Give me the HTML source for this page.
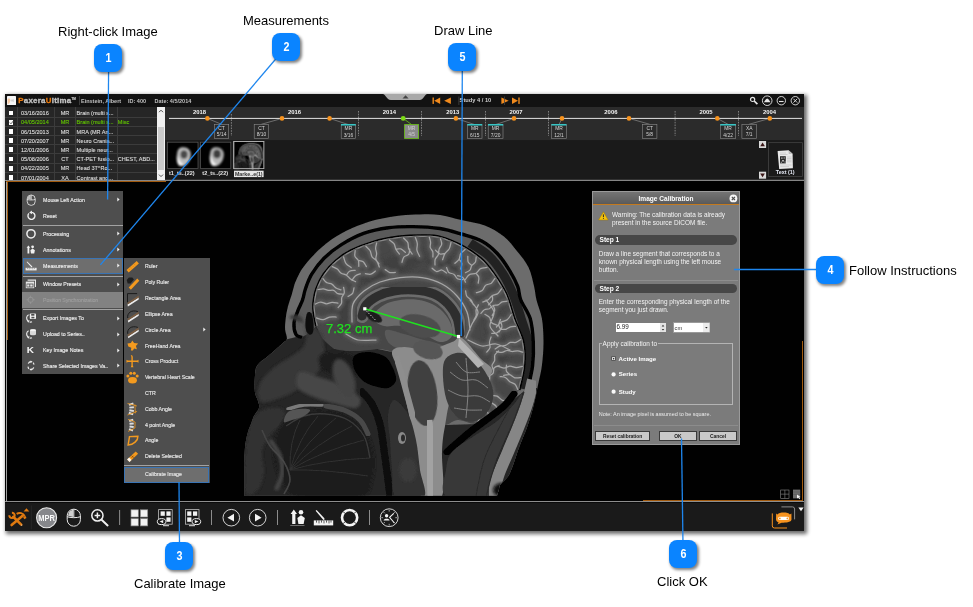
<!DOCTYPE html>
<html>
<head>
<meta charset="utf-8">
<title>Image Calibration</title>
<style>
html,body{margin:0;padding:0;background:#fff;}
body{width:973px;height:607px;position:relative;overflow:hidden;font-family:"Liberation Sans",sans-serif;}
.abs{position:absolute;}
/* callouts */
.badge{position:absolute;width:28px;height:28px;border-radius:8px;background:#0a84ff;color:#fff;font-weight:bold;font-size:12.5px;line-height:28px;text-align:center;box-shadow:1.5px 2px 3px rgba(0,0,0,.5);}
.badge span{display:inline-block;transform:scaleX(.86);}
.lbl{position:absolute;font-size:13px;line-height:15px;color:#000;white-space:nowrap;}
/* app window */
#win{position:absolute;left:5px;top:94px;width:799px;height:437px;background:#000;box-shadow:2px 2px 4px 1px rgba(0,0,0,.6);}
#titlebar{position:absolute;left:0;top:0;width:799px;height:13px;background:#121212;}
#top{position:absolute;left:0;top:13px;width:799px;height:73px;background:#1b1b1b;}
#viewer{position:absolute;left:0;top:86px;width:799px;height:322px;background:#000;overflow:hidden;}
.ln{position:absolute;}
#toolbar{position:absolute;left:0;top:408.6px;width:799px;height:28.4px;background:#1a1a1a;}
.tt{position:absolute;white-space:nowrap;color:#c0c0c0;font-weight:bold;font-size:5.5px;line-height:8px;margin-top:-0.5px}
/* study list */
#list{position:absolute;left:0;top:13px;width:160px;height:73px;background:#262626;overflow:hidden;}
.row{position:absolute;left:0;width:152px;height:9.18px;border-bottom:1px solid #3c3c3c;box-sizing:border-box;}
.row span{position:absolute;top:0.8px;font-size:5.55px;line-height:9.2px;color:#dadada;white-space:nowrap;font-weight:normal;-webkit-text-stroke:0.12px currentColor;}
.row i{position:absolute;left:3.9px;top:2.3px;width:4.6px;height:4.7px;background:#fff;}
.row.g span{color:#62c400;}
.vl{position:absolute;top:13px;width:1px;height:73px;background:#3c3c3c;}
/* menus */
.menu{position:absolute;background:#4e4e4e;}
.mi{position:absolute;left:0;height:16px;white-space:nowrap;color:#e6e6e6;font-size:5.2px;font-weight:bold;line-height:16px;}
.mi b{position:absolute;left:21px;top:0;font-weight:bold;}
.sep{position:absolute;left:1px;height:1px;background:#9a9a9a;}
.arr{position:absolute;width:0;height:0;border-left:2.5px solid #fff;border-top:2px solid transparent;border-bottom:2px solid transparent;}
.mt{position:absolute;white-space:nowrap;font-size:5.25px;font-weight:normal;-webkit-text-stroke:0.14px currentColor;line-height:8px;height:8px;margin-top:0.1px}
/* dialog */
#dlg{position:absolute;left:592px;top:191px;width:148px;height:254.4px;background:#7b7b7b;box-sizing:border-box;border:1px solid #9a9a9a;font-size:6.45px;color:#f4f4f4;}
#dlg .t{position:absolute;white-space:nowrap;line-height:7.6px;}
.step{position:absolute;left:2px;width:142px;height:9.5px;border-radius:5px;background:#474747;color:#fff;font-weight:bold;font-size:6.6px;line-height:9.5px;text-indent:4.5px;}
.btn{position:absolute;height:10.5px;box-sizing:border-box;border:1px solid #3a3a3a;background:#c9c9c9;color:#1a1a1a;font-weight:bold;font-size:4.9px;line-height:9px;text-align:center;}
</style>
</head>
<body>
<div id="root" style="position:absolute;left:0;top:0;width:973px;height:607px;will-change:transform;opacity:0.999">

<!-- ================= APP WINDOW ================= -->
<div id="win">
  <div id="titlebar">
    <!-- app icon -->
    <svg class="abs" style="left:2px;top:2px" width="9" height="9" viewBox="0 0 9 9"><rect width="9" height="9" rx="0.6" fill="#f6f6f6"/><path d="M0.6 3 C2 2 3.4 2.6 3.2 4.4 C3 6.4 2.4 7.6 0.6 8 Z" fill="#f7c9a2"/><path d="M4.2 4.4 L6.6 3 L6.6 6 Z" fill="#c9c9c9"/><circle cx="4.6" cy="4.5" r="1.1" fill="#d6d6d6"/></svg>
    <div class="abs" style="left:13.2px;top:0.9px;font-size:7.9px;line-height:12px;font-weight:bold;color:#c4c4c4;white-space:nowrap;letter-spacing:0.27px;-webkit-text-stroke:0.3px #c4c4c4"><span style="color:#e8780c;-webkit-text-stroke:0.3px #e8780c">P</span>axera<span style="color:#e8780c;-webkit-text-stroke:0.3px #e8780c">U</span>ltima<span style="font-size:3.1px;position:relative;top:-2.6px;left:-0.1px;letter-spacing:0;-webkit-text-stroke:0.15px #c4c4c4">TM</span></div>
    <div class="abs" style="left:73.5px;top:2px;width:1px;height:9px;background:#3a3a3a"></div>
    <div class="tt" style="left:76px;top:3px">Einstein, Albert</div>
    <div class="tt" style="left:123px;top:3px">ID: 400</div>
    <div class="tt" style="left:149.6px;top:3px">Date: 4/5/2014</div>
    <!-- pull tab -->
    <svg class="abs" style="left:376px;top:0" width="50" height="8" viewBox="0 0 50 8"><path d="M1.7 0 H46.4 C43.4 0 43 6 38.6 6 H9.8 C5.4 6 4.8 0 1.7 0 Z" fill="#a9a9a9"/><path d="M21.5 4.4 L24.55 1.2 L27.6 4.4 Z" fill="#444"/></svg>
    <!-- study nav -->
    <svg class="abs" style="left:426px;top:2px" width="92" height="10" viewBox="0 0 92 10">
      <g fill="#f08a1d">
        <rect x="1.5" y="1.5" width="1.4" height="6.4"/><path d="M9.2 1.5 V7.9 L3.2 4.7 Z"/>
        <path d="M19.9 1.5 V7.9 L13.2 4.7 Z"/>
        <path d="M70.4 1.5 V7.9 L77.7 4.7 Z"/>
        <path d="M81 1.5 V7.9 L87 4.7 Z"/><rect x="87.3" y="1.5" width="1.4" height="6.4"/>
      </g>
      <rect x="27.5" y="0.5" width="0.8" height="8.5" fill="#444"/><rect x="73" y="0.5" width="0.8" height="8.5" fill="#444"/>
    </svg>
    <div class="tt" style="left:454.6px;top:2.6px;color:#cfcfcf;font-size:5.7px">Study 4 / 10</div>
    <!-- window buttons -->
    <svg class="abs" style="left:742px;top:1.3px" width="56" height="12" viewBox="0 0 56 12">
      <g fill="none" stroke="#e6e6e6" stroke-width="0.9">
        <circle cx="5.6" cy="4.4" r="2.1" stroke-width="1.2"/><path d="M7.2 6 L10.4 9.2" stroke-width="1.7"/>
        <circle cx="20.2" cy="5.7" r="4.8"/><circle cx="34.3" cy="5.7" r="4.2"/><circle cx="48.3" cy="5.7" r="4.2"/>
        <path d="M32 6.5 H36.6" stroke-width="1.1"/>
        <path d="M46.4 3.8 L50.2 7.6 M50.2 3.8 L46.4 7.6"/>
      </g>
      <path d="M16.9 7.2 C18 5.2 19 3.6 20.2 3.4 C21.4 3.6 22.4 5.2 23.5 7.2 Z" fill="#e6e6e6"/>
    </svg>
  </div>
  <div id="top">
    <svg class="abs" style="left:0;top:-13px" width="799" height="87" viewBox="5 94 799 87" font-family="Liberation Sans, sans-serif">
      <!-- timeline panel -->
      <rect x="164.6" y="107" width="640" height="33.3" fill="#2b2b2b"/>
      <rect x="164.6" y="140.3" width="640" height="40" fill="#1a1a1a"/>
      <!-- dashed separators -->
      <g stroke="#b8b8b8" stroke-width="0.6" stroke-dasharray="1.6 1.1">
        <line x1="231.4" y1="114" x2="231.4" y2="136"/><line x1="358.5" y1="111" x2="358.5" y2="136"/>
        <line x1="421.5" y1="111" x2="421.5" y2="136"/><line x1="485.5" y1="111" x2="485.5" y2="136"/>
        <line x1="548.5" y1="111" x2="548.5" y2="136"/><line x1="675.1" y1="111" x2="675.1" y2="136"/>
        <line x1="738.5" y1="111" x2="738.5" y2="136"/>
      </g>
      <!-- connectors -->
      <g stroke="#9a9a9a" stroke-width="0.6" fill="none">
        <path d="M207.4 118.4 L221.5 124.3"/><path d="M282 118.4 L261.3 124.3"/><path d="M329.6 118.4 L348.4 124.6"/>
        <path d="M455.9 118.4 L474.7 124.6"/><path d="M514 118.4 L495.5 124.6"/><path d="M562 118.4 L559 124.6"/>
        <path d="M629 118.4 L649.7 124.3"/><path d="M717.3 118.4 L728 124.3"/><path d="M769.8 118.4 L749 124.3"/>
      </g>
      <path d="M403.2 118.4 L411.5 124.5" stroke="#6cc417" stroke-width="0.8"/>
      <!-- main line -->
      <rect x="169" y="117.9" width="633" height="1" fill="#e2e2e2"/>
      <!-- dots -->
      <g fill="#f7931e">
        <circle cx="207.4" cy="118.4" r="2.3"/><circle cx="282" cy="118.4" r="2.3"/><circle cx="329.6" cy="118.4" r="2.3"/>
        <circle cx="455.9" cy="118.4" r="2.3"/><circle cx="514" cy="118.4" r="2.3"/><circle cx="562" cy="118.4" r="2.3"/>
        <circle cx="629" cy="118.4" r="2.3"/><circle cx="717.3" cy="118.4" r="2.3"/><circle cx="769.8" cy="118.4" r="2.3"/>
      </g>
      <circle cx="403.2" cy="118.4" r="2.4" fill="#7ddc16"/>
      <!-- years -->
      <g fill="#f2f2f2" font-weight="bold" font-size="5.9" text-anchor="middle">
        <text x="199.6" y="113.7">2018</text><text x="294.6" y="113.7">2016</text><text x="389.4" y="113.7">2014</text>
        <text x="452.7" y="113.7">2013</text><text x="516" y="113.7">2007</text><text x="610.9" y="113.7">2006</text>
        <text x="706" y="113.7">2005</text><text x="769.5" y="113.7">2004</text>
      </g>
      <!-- study boxes -->
      <g fill="#2b2b2b" stroke="#8c8c8c" stroke-width="0.6">
        <rect x="214.5" y="124.4" width="14.2" height="14.1"/><rect x="254.2" y="124.4" width="14.3" height="14.1"/>
        <rect x="341.2" y="124.7" width="14.4" height="13.8"/><rect x="467.5" y="124.7" width="14.5" height="13.8"/>
        <rect x="488.2" y="124.7" width="14.8" height="13.8"/><rect x="551.6" y="124.7" width="14.7" height="13.8"/>
        <rect x="642.6" y="124.4" width="14.3" height="14.1"/><rect x="720.5" y="124.7" width="15.2" height="13.8"/>
        <rect x="741.9" y="124.4" width="14.6" height="14.1"/>
      </g>
      <rect x="404.6" y="124.6" width="14" height="13.8" fill="#8a8a8a" stroke="#6cc417" stroke-width="0.8"/>
      <g fill="#35d0d0">
        <rect x="341" y="124.1" width="14.8" height="1.4"/><rect x="467.3" y="124.1" width="14.9" height="1.4"/>
        <rect x="488" y="124.1" width="15.2" height="1.4"/><rect x="551.4" y="124.1" width="15.1" height="1.4"/>
        <rect x="720.3" y="124.1" width="15.6" height="1.4"/>
      </g>
      <g fill="#d6d6d6" font-size="4.9" text-anchor="middle">
        <text x="221.6" y="130.1">CT</text><text x="221.6" y="136.4">5/14</text>
        <text x="261.4" y="130.1">CT</text><text x="261.4" y="136.4">8/10</text>
        <text x="348.4" y="130.4">MR</text><text x="348.4" y="136.7">3/16</text>
        <text x="411.6" y="130.1" fill="#cfcfcf">MR</text><text x="411.6" y="136.4" fill="#cfcfcf">4/5</text>
        <text x="474.7" y="130.4">MR</text><text x="474.7" y="136.7">6/15</text>
        <text x="495.6" y="130.4">MR</text><text x="495.6" y="136.7">7/20</text>
        <text x="559" y="130.4">MR</text><text x="559" y="136.7">12/1</text>
        <text x="649.7" y="130.1">CT</text><text x="649.7" y="136.4">5/8</text>
        <text x="728.1" y="130.4">MR</text><text x="728.1" y="136.7">4/22</text>
        <text x="749.2" y="130.1">XA</text><text x="749.2" y="136.4">7/1</text>
      </g>
      <!-- thumbnails -->
      <defs>
        <filter id="b1" x="-20%" y="-20%" width="140%" height="140%"><feGaussianBlur stdDeviation="0.9"/></filter>
        <filter id="b05" x="-20%" y="-20%" width="140%" height="140%"><feGaussianBlur stdDeviation="0.5"/></filter>
      </defs>
      <g>
        <rect x="167.4" y="142.2" width="30.6" height="26.4" fill="#000" stroke="#5a5a5a" stroke-width="0.7"/>
        <rect x="200.6" y="142.2" width="30.2" height="26.4" fill="#000" stroke="#5a5a5a" stroke-width="0.7"/>
        <rect x="233.8" y="141.5" width="30" height="27.1" fill="#000" stroke="#b0b0b0" stroke-width="0.9"/>
        <g filter="url(#b1)">
          <path d="M181 147.5 C188 146 192 151 190.5 157 C189.5 163 185 167 180.5 166 C177 165 176 159 177 154 C177.5 150 178.5 148 181 147.5 Z" fill="#bdbdbd"/>
          <ellipse cx="184" cy="154.5" rx="3.6" ry="4.2" fill="#4a4a4a"/>
          <path d="M177.5 156 C178.5 160 181 163 184 165 L180 166 C177 164 176.5 160 177.5 156Z" fill="#f4f4f4"/>
          <path d="M214 147.5 C221 146 225 151 223.5 157 C222.5 163 218 167 213.5 166 C210 165 209 159 210 154 C210.5 150 211.5 148 214 147.5 Z" fill="#b8b8b8"/>
          <ellipse cx="217" cy="154" rx="3.8" ry="4.4" fill="#3e3e3e"/>
          <path d="M210.5 155 C211.5 160 214 163 217 165 L213 166 C210 164 209.5 159 210.5 155Z" fill="#f4f4f4"/>
        </g>
        <use href="#mriG" transform="translate(234.6,142.2) scale(0.0955) translate(-244,-210)"/><rect x="233.8" y="141.5" width="30" height="27.1" fill="none" stroke="#b0b0b0" stroke-width="0.9"/>
      </g>
      <g font-size="5.5" font-weight="bold" fill="#e4e4e4" text-anchor="middle">
        <text x="181.8" y="175.2">t1_ts..(22)</text><text x="215.2" y="175.2">t2_ts..(22)</text>
      </g>
      <rect x="234" y="170.7" width="29.6" height="6.4" fill="#e6e6e6"/>
      <text x="248.8" y="175.7" font-size="5.3" font-weight="bold" fill="#333" text-anchor="middle">Marke..e(1)</text>
      <!-- right side: scroll arrows + text thumb -->
      <rect x="759" y="141" width="7.1" height="7" fill="#dadada"/><path d="M760.2 146.3 L762.55 142.4 L764.9 146.3 Z" fill="#3a1616"/>
      <rect x="759" y="171.7" width="7.1" height="7" fill="#dadada"/><path d="M760.2 173.4 L762.55 177.3 L764.9 173.4 Z" fill="#3a1616"/>
      <rect x="768.4" y="142.7" width="34" height="33.8" fill="#1a1a1a" stroke="#4a4a4a" stroke-width="0.7"/>
      <g>
        <path d="M777.6 151 L788.5 150.3 L792.6 153.8 L792.9 168.3 L779.2 169 Z" fill="#e9e9e9"/>
        <path d="M788.5 150.3 L788.8 153.9 L792.6 153.8 Z" fill="#bdbdbd"/>
        <rect x="780" y="156.2" width="5.8" height="7.2" fill="#2a2a2a"/>
        <path d="M781.2 157.5 h1.3 v1.3 h-1.3z M783.6 157.4 h1.2 v1.2 h-1.2z M782.2 160 h1.6 v1.6 h-1.6z M780.8 161.8 h1 v1 h-1z M784.6 161.6 h0.9 v1 h-0.9z" fill="#cfcfcf"/>
        <g stroke="#b5b5b5" stroke-width="0.5"><path d="M780 153 H786 M780 154.5 H787.5 M787 157 H791.5 M787 158.6 H791.5 M787 160.2 H791.5 M787 161.8 H791.5 M780.2 165 H791.5 M780.2 166.6 H789"/></g>
      </g>
      <text x="785.2" y="174.3" font-size="5.4" font-weight="bold" fill="#e4e8f4" text-anchor="middle">Text (1)</text>
      <!-- viewer top line -->
      <rect x="164.6" y="179.7" width="640" height="1" fill="#6a6a6a"/>
    </svg>
  </div>
  <div id="list">
    <div class="row" style="top:1.45px"><i></i><span style="left:16px">03/16/2016</span><span style="left:49.5px;width:21px;text-align:center">MR</span><span style="left:71.6px">Brain (multi s...</span><span style="left:112.8px"></span></div>
    <div class="row g" style="top:10.63px"><i></i><span style="left:16px">04/05/2014</span><span style="left:49.5px;width:21px;text-align:center">MR</span><span style="left:71.6px">Brain (multi s...</span><span style="left:112.8px">Misc</span></div>
    <div class="row" style="top:19.81px"><i></i><span style="left:16px">06/15/2013</span><span style="left:49.5px;width:21px;text-align:center">MR</span><span style="left:71.6px">MRA (MR An...</span><span style="left:112.8px"></span></div>
    <div class="row" style="top:28.99px"><i></i><span style="left:16px">07/20/2007</span><span style="left:49.5px;width:21px;text-align:center">MR</span><span style="left:71.6px">Neuro Crania...</span><span style="left:112.8px"></span></div>
    <div class="row" style="top:38.17px"><i></i><span style="left:16px">12/01/2006</span><span style="left:49.5px;width:21px;text-align:center">MR</span><span style="left:71.6px">Multiple neur...</span><span style="left:112.8px"></span></div>
    <div class="row" style="top:47.35px"><i></i><span style="left:16px">05/08/2006</span><span style="left:49.5px;width:21px;text-align:center">CT</span><span style="left:71.6px">CT-PET fusio...</span><span style="left:112.8px">CHEST, ABD...</span></div>
    <div class="row" style="top:56.53px"><i></i><span style="left:16px">04/22/2005</span><span style="left:49.5px;width:21px;text-align:center">MR</span><span style="left:71.6px">Head 3T^Ro...</span><span style="left:112.8px"></span></div>
    <div class="row" style="top:65.71px"><i></i><span style="left:16px">07/01/2004</span><span style="left:49.5px;width:21px;text-align:center">XA</span><span style="left:71.6px">Contrast ang...</span><span style="left:112.8px"></span></div>
    <svg class="abs" style="left:3.8px;top:12.9px" width="5" height="5" viewBox="0 0 5 5"><path d="M0.8 2.6 L2 3.8 L4.3 1" stroke="#555" stroke-width="0.9" fill="none"/></svg>
    <div class="abs" style="left:12px;top:0;width:1px;height:73px;background:#3c3c3c"></div>
    <div class="abs" style="left:49px;top:0;width:1px;height:73px;background:#3c3c3c"></div>
    <div class="abs" style="left:70.4px;top:0;width:1px;height:73px;background:#3c3c3c"></div>
    <div class="abs" style="left:111.6px;top:0;width:1px;height:73px;background:#3c3c3c"></div>
    <div class="abs" style="left:152px;top:0;width:8px;height:73px;background:#f0f0f0"></div>
    <div class="abs" style="left:153px;top:19.5px;width:6px;height:43px;background:#cacaca"></div>
    <svg class="abs" style="left:152px;top:0" width="8" height="73" viewBox="0 0 8 73"><path d="M2 5.2 L4 3.2 L6 5.2 M2 67.6 L4 69.6 L6 67.6" stroke="#505050" stroke-width="1" fill="none"/></svg>
  </div>
  <div id="viewer">
    <!--MRI-START--><svg class="abs" style="left:0;top:0" width="799" height="322" viewBox="5 180 799 322">
<defs>
<filter id="mb0" x="-2%" y="-2%" width="104%" height="104%"><feGaussianBlur stdDeviation="0.6"/></filter>
<filter id="mb1" x="-5%" y="-5%" width="110%" height="110%"><feGaussianBlur stdDeviation="0.7"/></filter>
<filter id="mb2" x="-10%" y="-10%" width="120%" height="120%"><feGaussianBlur stdDeviation="1.6"/></filter>
<filter id="mb3" x="-20%" y="-20%" width="140%" height="140%"><feGaussianBlur stdDeviation="3.2"/></filter>
<clipPath id="cHead"><path d="M291.6 295.0 C291.0 297.1 288.7 303.6 287.7 307.5 C286.7 311.4 286.1 314.9 285.7 318.5 C285.3 322.1 284.9 326.0 285.1 329.4 C285.3 332.8 287.4 336.4 286.9 338.8 C286.4 341.2 285.4 340.6 282.3 343.5 C279.2 346.4 272.4 352.4 268.2 356.0 C264.0 359.6 259.4 362.0 257.2 365.4 C255.0 368.8 255.3 372.0 254.9 376.4 C254.5 380.8 254.4 387.9 254.9 392.0 C255.4 396.1 257.3 398.3 258.0 401.0 C258.7 403.7 259.7 405.5 259.0 408.0 C258.3 410.5 255.3 413.5 254.0 416.0 C252.7 418.5 252.4 420.3 251.4 423.0 C250.4 425.7 248.9 428.8 248.0 432.0 C247.1 435.2 246.3 438.0 245.7 442.0 C245.1 446.0 244.7 451.3 244.4 456.0 C244.2 460.7 244.2 463.4 244.2 470.0 C244.2 476.6 244.2 491.5 244.2 495.8 L497 495.8 L499.0 489.0 C499.2 488.3 499.0 486.5 500.0 485.0 C501.0 483.5 503.4 481.8 505.0 480.0 C506.6 478.2 507.9 477.2 509.5 474.0 C511.1 470.8 512.9 465.4 514.5 461.0 C516.1 456.6 517.4 451.8 519.0 447.5 C520.6 443.2 522.4 439.1 524.0 435.0 C525.6 430.9 526.8 428.2 528.5 423.0 C530.2 417.8 532.4 410.3 534.0 404.0 C535.6 397.7 536.7 391.4 538.0 385.0 C539.3 378.6 541.0 372.7 541.9 365.5 C542.8 358.3 543.5 349.8 543.5 342.0 C543.5 334.2 543.1 325.5 541.9 318.5 C540.7 311.5 537.8 305.4 536.5 300.0 C535.2 294.6 535.4 291.8 534.1 286.4 C532.8 281.0 531.3 273.3 528.6 267.6 C525.9 261.9 521.9 257.2 517.7 252.0 C513.5 246.8 509.1 240.7 503.6 236.3 C498.1 231.9 491.9 228.1 484.8 225.4 C477.8 222.7 468.8 221.7 461.3 219.9 C453.8 218.2 446.9 215.8 440.0 214.9 C433.1 214.0 426.6 214.3 420.0 214.4 C413.4 214.5 408.0 214.5 400.7 215.4 C393.4 216.3 384.2 217.6 376.0 219.8 C367.8 222.0 358.6 225.2 351.2 228.5 C343.8 231.8 337.7 235.3 331.5 239.6 C325.3 243.9 319.1 249.4 314.2 254.4 C309.2 259.4 305.1 264.4 301.8 269.3 C298.5 274.2 295.8 281.6 294.6 284.0 Z"/></clipPath>
<clipPath id="cBrain"><path d="M316.6 326.1 C316.2 324.1 314.7 317.5 314.2 313.8 C313.7 310.1 313.3 308.0 313.7 303.9 C314.1 299.8 314.9 293.9 316.6 289.0 C318.3 284.1 320.7 278.9 324.0 274.2 C327.3 269.5 331.9 264.5 336.4 260.6 C340.9 256.7 345.0 253.8 351.2 250.7 C357.4 247.6 365.7 244.4 373.5 242.1 C381.3 239.8 390.0 238.2 398.2 237.1 C406.4 236.0 415.9 235.7 422.9 235.7 C429.9 235.7 433.6 235.4 440.0 237.1 C446.4 238.8 454.6 242.2 461.3 245.7 C468.0 249.2 474.9 253.8 480.1 258.2 C485.3 262.6 488.7 267.1 492.6 272.3 C496.5 277.5 501.0 284.9 503.6 289.5 C506.2 294.1 506.6 295.2 508.3 300.0 C510.0 304.8 511.6 311.5 514.0 318.5 C516.5 325.5 521.3 334.2 523.0 342.0 C524.7 349.8 524.7 357.5 524.0 365.5 C523.3 373.5 519.8 385.9 519.0 390.0 L519.0 390.0 C517.2 392.3 512.5 399.3 508.0 404.0 C503.5 408.7 497.3 414.7 492.0 418.0 C486.7 421.3 481.7 423.7 476.0 424.0 C470.3 424.3 463.0 419.8 458.0 420.0 C453.0 420.2 449.7 424.3 446.0 425.0 C442.3 425.7 439.7 424.8 436.0 424.0 C432.3 423.2 428.3 425.3 424.0 420.0 C419.7 414.7 414.0 402.0 410.0 392.0 C406.0 382.0 403.0 366.7 400.0 360.0 C397.0 353.3 395.7 353.8 392.0 352.0 C388.3 350.2 383.0 349.2 377.7 349.0 C372.4 348.8 365.3 350.8 360.0 351.0 C354.7 351.2 350.3 350.9 346.0 350.5 C341.7 350.1 337.9 350.4 334.0 348.4 C330.1 346.4 325.7 342.2 322.8 338.5 C319.9 334.8 317.6 328.2 316.6 326.1 Z"/></clipPath>
<clipPath id="cImg"><rect x="244" y="205" width="310" height="290.8"/></clipPath>
<filter id="gyri" x="0" y="0" width="100%" height="100%"><feTurbulence type="fractalNoise" baseFrequency="0.085" numOctaves="2" seed="7" result="n"/><feColorMatrix in="n" type="matrix" values="0 0 0 0 0  0 0 0 0 0  0 0 0 0 0  2.6 0 0 0 -0.95"/></filter>
</defs>
<g id="mriG" clip-path="url(#cImg)"><g filter="url(#mb0)">
<rect x="244" y="205" width="310" height="290.8" fill="#020202"/>
<g filter="url(#mb1)">
<path d="M291.6 295.0 C291.0 297.1 288.7 303.6 287.7 307.5 C286.7 311.4 286.1 314.9 285.7 318.5 C285.3 322.1 284.9 326.0 285.1 329.4 C285.3 332.8 287.4 336.4 286.9 338.8 C286.4 341.2 285.4 340.6 282.3 343.5 C279.2 346.4 272.4 352.4 268.2 356.0 C264.0 359.6 259.4 362.0 257.2 365.4 C255.0 368.8 255.3 372.0 254.9 376.4 C254.5 380.8 254.4 387.9 254.9 392.0 C255.4 396.1 257.3 398.3 258.0 401.0 C258.7 403.7 259.7 405.5 259.0 408.0 C258.3 410.5 255.3 413.5 254.0 416.0 C252.7 418.5 252.4 420.3 251.4 423.0 C250.4 425.7 248.9 428.8 248.0 432.0 C247.1 435.2 246.3 438.0 245.7 442.0 C245.1 446.0 244.7 451.3 244.4 456.0 C244.2 460.7 244.2 463.4 244.2 470.0 C244.2 476.6 244.2 491.5 244.2 495.8 L497 495.8 L499.0 489.0 C499.2 488.3 499.0 486.5 500.0 485.0 C501.0 483.5 503.4 481.8 505.0 480.0 C506.6 478.2 507.9 477.2 509.5 474.0 C511.1 470.8 512.9 465.4 514.5 461.0 C516.1 456.6 517.4 451.8 519.0 447.5 C520.6 443.2 522.4 439.1 524.0 435.0 C525.6 430.9 526.8 428.2 528.5 423.0 C530.2 417.8 532.4 410.3 534.0 404.0 C535.6 397.7 536.7 391.4 538.0 385.0 C539.3 378.6 541.0 372.7 541.9 365.5 C542.8 358.3 543.5 349.8 543.5 342.0 C543.5 334.2 543.1 325.5 541.9 318.5 C540.7 311.5 537.8 305.4 536.5 300.0 C535.2 294.6 535.4 291.8 534.1 286.4 C532.8 281.0 531.3 273.3 528.6 267.6 C525.9 261.9 521.9 257.2 517.7 252.0 C513.5 246.8 509.1 240.7 503.6 236.3 C498.1 231.9 491.9 228.1 484.8 225.4 C477.8 222.7 468.8 221.7 461.3 219.9 C453.8 218.2 446.9 215.8 440.0 214.9 C433.1 214.0 426.6 214.3 420.0 214.4 C413.4 214.5 408.0 214.5 400.7 215.4 C393.4 216.3 384.2 217.6 376.0 219.8 C367.8 222.0 358.6 225.2 351.2 228.5 C343.8 231.8 337.7 235.3 331.5 239.6 C325.3 243.9 319.1 249.4 314.2 254.4 C309.2 259.4 305.1 264.4 301.8 269.3 C298.5 274.2 295.8 281.6 294.6 284.0 Z" fill="#6c6c6c"/>
</g>
<g clip-path="url(#cHead)"><g filter="url(#mb1)">
<path d="M280.0 341.0 L296.0 337.0 L306.0 335.0 L316.6 326.1 L322.8 338.5 L334.0 348.4 L346.0 350.5 L377.7 349.0 L392.0 352.0 L400.0 360.0 L410.0 392.0 L424.0 420.0 L446.0 425.0 L476.0 424.0 L508.0 404.0 L528.0 388.0 L540.0 388.0 L560.0 500.0 L230.0 500.0 L230.0 345.0 Z" fill="#282828"/>
<path d="M302.0 337.5 C301.0 337.0 297.3 336.9 296.0 334.5 C294.7 332.1 293.7 327.2 294.0 323.2 C294.3 319.2 296.5 314.5 297.9 310.6 C299.3 306.7 301.4 303.3 302.6 299.7 C303.9 296.1 303.9 293.2 305.4 289.0 C306.9 284.8 308.6 279.3 311.7 274.2 C314.8 269.1 319.1 263.1 324.0 258.2 C328.9 253.3 334.8 248.7 341.4 244.6 C348.0 240.5 355.8 236.2 363.6 233.4 C371.4 230.6 380.1 228.8 388.3 227.7 C396.5 226.6 404.4 226.5 413.0 226.6 C421.6 226.7 431.9 227.3 440.0 228.5 C448.1 229.7 454.4 231.9 461.3 234.0 C468.2 236.1 475.7 237.8 481.7 241.0 C487.7 244.2 492.6 248.5 497.3 253.5 C502.0 258.5 506.4 265.3 509.8 270.8 C513.2 276.3 515.9 281.5 517.7 286.4 C519.5 291.3 518.7 294.6 520.8 300.0 C522.9 305.4 528.1 311.5 530.2 318.5 C532.3 325.5 532.9 334.2 533.3 342.0 C533.7 349.8 533.5 357.8 532.6 365.5 C531.7 373.2 528.8 384.2 528.0 388.0 L519 390 L519.0 390.0 C519.8 385.9 523.3 373.5 524.0 365.5 C524.7 357.5 524.7 349.8 523.0 342.0 C521.3 334.2 516.5 325.5 514.0 318.5 C511.6 311.5 510.0 304.8 508.3 300.0 C506.6 295.2 506.2 294.1 503.6 289.5 C501.0 284.9 496.5 277.5 492.6 272.3 C488.7 267.1 485.3 262.6 480.1 258.2 C474.9 253.8 468.0 249.2 461.3 245.7 C454.6 242.2 446.4 238.8 440.0 237.1 C433.6 235.4 429.9 235.7 422.9 235.7 C415.9 235.7 406.4 236.0 398.2 237.1 C390.0 238.2 381.3 239.8 373.5 242.1 C365.7 244.4 357.4 247.6 351.2 250.7 C345.0 253.8 340.9 256.7 336.4 260.6 C331.9 264.5 327.3 269.5 324.0 274.2 C320.7 278.9 318.3 284.1 316.6 289.0 C314.9 293.9 314.1 299.8 313.7 303.9 C313.3 308.0 313.7 310.1 314.2 313.8 C314.7 317.5 316.2 324.1 316.6 326.1 Z" fill="#5a5a5a"/>
<path d="M470.0 243.0 C473.2 245.2 483.5 250.8 489.0 256.0 C494.5 261.2 499.0 267.7 503.0 274.0 C507.0 280.3 510.0 286.7 513.0 294.0 C516.0 301.3 518.5 310.0 521.0 318.0 C523.5 326.0 526.8 334.0 528.0 342.0 C529.2 350.0 528.8 358.2 528.0 366.0 C527.2 373.8 523.8 385.2 523.0 389.0" fill="none" stroke="#242424" stroke-width="9" stroke-linecap="butt"/>
<path d="M302.0 337.5 C301.0 337.0 297.3 336.9 296.0 334.5 C294.7 332.1 293.7 327.2 294.0 323.2 C294.3 319.2 296.5 314.5 297.9 310.6 C299.3 306.7 301.4 303.3 302.6 299.7 C303.9 296.1 303.9 293.2 305.4 289.0 C306.9 284.8 308.6 279.3 311.7 274.2 C314.8 269.1 319.1 263.1 324.0 258.2 C328.9 253.3 334.8 248.7 341.4 244.6 C348.0 240.5 355.8 236.2 363.6 233.4 C371.4 230.6 380.1 228.8 388.3 227.7 C396.5 226.6 404.4 226.5 413.0 226.6 C421.6 226.7 431.9 227.3 440.0 228.5 C448.1 229.7 454.4 231.9 461.3 234.0 C468.2 236.1 475.7 237.8 481.7 241.0 C487.7 244.2 492.6 248.5 497.3 253.5 C502.0 258.5 506.4 265.3 509.8 270.8 C513.2 276.3 515.9 281.5 517.7 286.4 C519.5 291.3 518.7 294.6 520.8 300.0 C522.9 305.4 528.1 311.5 530.2 318.5 C532.3 325.5 532.9 334.2 533.3 342.0 C533.7 349.8 533.5 357.8 532.6 365.5 C531.7 373.2 528.8 384.2 528.0 388.0" fill="none" stroke="#000" stroke-width="3.4"/>
<path d="M316.6 326.1 C316.2 324.1 314.7 317.5 314.2 313.8 C313.7 310.1 313.3 308.0 313.7 303.9 C314.1 299.8 314.9 293.9 316.6 289.0 C318.3 284.1 320.7 278.9 324.0 274.2 C327.3 269.5 331.9 264.5 336.4 260.6 C340.9 256.7 345.0 253.8 351.2 250.7 C357.4 247.6 365.7 244.4 373.5 242.1 C381.3 239.8 390.0 238.2 398.2 237.1 C406.4 236.0 415.9 235.7 422.9 235.7 C429.9 235.7 433.6 235.4 440.0 237.1 C446.4 238.8 454.6 242.2 461.3 245.7 C468.0 249.2 474.9 253.8 480.1 258.2 C485.3 262.6 488.7 267.1 492.6 272.3 C496.5 277.5 501.0 284.9 503.6 289.5 C506.2 294.1 506.6 295.2 508.3 300.0 C510.0 304.8 511.6 311.5 514.0 318.5 C516.5 325.5 521.3 334.2 523.0 342.0 C524.7 349.8 524.7 357.5 524.0 365.5 C523.3 373.5 519.8 385.9 519.0 390.0" fill="none" stroke="#000" stroke-width="3"/>
<path d="M316.6 326.1 C316.2 324.1 314.7 317.5 314.2 313.8 C313.7 310.1 313.3 308.0 313.7 303.9 C314.1 299.8 314.9 293.9 316.6 289.0 C318.3 284.1 320.7 278.9 324.0 274.2 C327.3 269.5 331.9 264.5 336.4 260.6 C340.9 256.7 345.0 253.8 351.2 250.7 C357.4 247.6 365.7 244.4 373.5 242.1 C381.3 239.8 390.0 238.2 398.2 237.1 C406.4 236.0 415.9 235.7 422.9 235.7 C429.9 235.7 433.6 235.4 440.0 237.1 C446.4 238.8 454.6 242.2 461.3 245.7 C468.0 249.2 474.9 253.8 480.1 258.2 C485.3 262.6 488.7 267.1 492.6 272.3 C496.5 277.5 501.0 284.9 503.6 289.5 C506.2 294.1 506.6 295.2 508.3 300.0 C510.0 304.8 511.6 311.5 514.0 318.5 C516.5 325.5 521.3 334.2 523.0 342.0 C524.7 349.8 524.7 357.5 524.0 365.5 C523.3 373.5 519.8 385.9 519.0 390.0 L519.0 390.0 C517.2 392.3 512.5 399.3 508.0 404.0 C503.5 408.7 497.3 414.7 492.0 418.0 C486.7 421.3 481.7 423.7 476.0 424.0 C470.3 424.3 463.0 419.8 458.0 420.0 C453.0 420.2 449.7 424.3 446.0 425.0 C442.3 425.7 439.7 424.8 436.0 424.0 C432.3 423.2 428.3 425.3 424.0 420.0 C419.7 414.7 414.0 402.0 410.0 392.0 C406.0 382.0 403.0 366.7 400.0 360.0 C397.0 353.3 395.7 353.8 392.0 352.0 C388.3 350.2 383.0 349.2 377.7 349.0 C372.4 348.8 365.3 350.8 360.0 351.0 C354.7 351.2 350.3 350.9 346.0 350.5 C341.7 350.1 337.9 350.4 334.0 348.4 C330.1 346.4 325.7 342.2 322.8 338.5 C319.9 334.8 317.6 328.2 316.6 326.1 Z" fill="#474747"/>
</g></g>
<g clip-path="url(#cBrain)">
<path d="M316.6 326.1 C316.2 324.1 314.7 317.5 314.2 313.8 C313.7 310.1 313.3 308.0 313.7 303.9 C314.1 299.8 314.9 293.9 316.6 289.0 C318.3 284.1 320.7 278.9 324.0 274.2 C327.3 269.5 331.9 264.5 336.4 260.6 C340.9 256.7 345.0 253.8 351.2 250.7 C357.4 247.6 365.7 244.4 373.5 242.1 C381.3 239.8 390.0 238.2 398.2 237.1 C406.4 236.0 415.9 235.7 422.9 235.7 C429.9 235.7 433.6 235.4 440.0 237.1 C446.4 238.8 454.6 242.2 461.3 245.7 C468.0 249.2 474.9 253.8 480.1 258.2 C485.3 262.6 488.7 267.1 492.6 272.3 C496.5 277.5 501.0 284.9 503.6 289.5 C506.2 294.1 506.6 295.2 508.3 300.0 C510.0 304.8 511.6 311.5 514.0 318.5 C516.5 325.5 521.3 334.2 523.0 342.0 C524.7 349.8 524.7 357.5 524.0 365.5 C523.3 373.5 519.8 385.9 519.0 390.0" fill="none" stroke="#8a8a8a" stroke-width="2.4" filter="url(#mb1)"/>
<g filter="url(#mb3)" fill="#404040"><ellipse cx="392" cy="268" rx="34" ry="10" transform="rotate(-22 392 268)"/><ellipse cx="450" cy="268" rx="26" ry="9" transform="rotate(24 450 268)"/><ellipse cx="496" cy="336" rx="9" ry="30" transform="rotate(-10 496 336)"/><ellipse cx="346" cy="312" rx="9" ry="20"/></g>
<g filter="url(#mb2)" fill="none" stroke="#5c5c5c" stroke-width="6" stroke-linecap="round" stroke-linejoin="round">
<path d="M316.4 317.9 C317.5 318.2 320.9 319.9 323.0 319.7 C325.2 319.6 327.2 317.6 329.4 317.1 C331.5 316.7 335.1 317.0 336.2 317.0 M315.2 304.1 C316.1 303.7 318.9 302.1 320.7 302.0 C322.6 302.0 324.5 303.7 326.4 303.8 C328.2 303.8 330.1 302.5 332.1 302.4 C334.0 302.3 337.0 303.0 337.9 303.1 M318.0 289.5 C318.9 289.4 321.5 288.7 323.3 288.8 C325.0 289.0 326.7 290.0 328.4 290.3 C330.1 290.6 332.1 289.9 333.7 290.4 C335.3 291.0 336.3 293.0 337.9 293.7 C339.5 294.3 342.3 294.2 343.2 294.3 M323.0 278.6 C323.6 279.3 325.2 281.7 326.7 282.6 C328.2 283.6 330.4 283.2 331.9 284.1 C333.5 285.0 334.4 287.0 335.9 287.9 C337.4 288.9 340.1 289.5 341.0 289.8 M332.2 266.6 C333.1 267.0 335.8 268.0 337.3 269.1 C338.8 270.2 339.6 272.2 341.2 273.2 C342.7 274.2 344.9 274.2 346.4 275.2 C348.0 276.1 349.0 278.0 350.5 279.0 C352.0 280.1 354.7 281.2 355.5 281.6 M346.4 275.2 C346.9 274.5 348.0 272.0 349.5 271.2 C351.0 270.4 354.2 270.4 355.2 270.3 M343.6 256.9 C344.0 257.9 344.6 261.5 345.9 263.3 C347.1 265.1 350.3 266.8 351.2 267.5 M355.2 250.5 C355.2 251.4 354.4 254.4 354.9 256.1 C355.4 257.8 357.7 258.9 358.4 260.6 C359.0 262.3 358.7 265.3 358.8 266.3 M358.4 260.6 C359.2 260.8 361.9 260.8 363.2 261.8 C364.5 262.8 365.8 265.8 366.4 266.6 M365.8 246.2 C366.5 247.0 369.1 249.1 370.1 250.8 C371.2 252.6 371.0 255.1 372.1 256.9 C373.3 258.6 375.6 259.5 376.8 261.1 C378.0 262.8 378.9 266.0 379.3 267.0 M376.7 242.8 C376.5 243.7 375.6 246.4 375.6 248.2 C375.6 250.0 376.6 251.8 376.6 253.6 C376.7 255.5 375.5 257.4 375.9 259.1 C376.3 260.8 378.4 263.0 378.9 263.8 M389.5 240.0 C390.2 240.6 392.9 242.2 394.0 243.7 C395.1 245.3 395.0 247.6 395.9 249.3 C396.8 251.0 398.8 253.2 399.4 254.0 M395.9 249.3 C396.7 249.2 399.3 248.4 400.9 248.9 C402.4 249.4 404.6 251.8 405.4 252.4 M403.6 238.0 C404.3 238.8 406.9 240.8 407.8 242.6 C408.6 244.4 408.0 246.9 408.7 248.8 C409.4 250.7 411.6 253.2 412.2 254.0 M415.3 237.3 C415.6 238.4 417.1 241.5 417.3 243.6 C417.6 245.8 416.5 248.1 416.9 250.2 C417.3 252.4 419.2 255.3 419.6 256.3 M429.3 237.2 C429.5 238.0 430.5 240.5 430.6 242.2 C430.8 243.9 429.9 245.7 430.2 247.3 C430.6 248.9 432.3 250.2 432.8 251.8 C433.2 253.4 432.9 256.1 432.9 256.9 M440.5 238.8 C440.7 239.7 442.0 242.5 441.7 244.2 C441.5 245.9 439.7 247.4 439.1 249.1 C438.5 250.9 439.0 253.0 438.3 254.7 C437.7 256.4 435.8 257.6 435.2 259.3 C434.6 261.0 435.0 263.9 435.0 264.9 M451.0 242.5 C450.7 243.5 450.2 246.9 449.2 248.8 C448.2 250.6 446.0 251.8 444.9 253.6 C443.8 255.5 443.0 258.7 442.6 259.7 M444.9 253.6 C444.1 253.7 441.5 254.4 439.9 253.9 C438.4 253.3 436.3 250.8 435.5 250.2 M465.1 249.5 C464.4 250.2 461.7 251.9 460.7 253.5 C459.7 255.1 460.1 257.5 459.1 259.2 C458.2 260.8 455.6 262.6 454.9 263.3 M459.1 259.2 C459.6 259.9 461.5 261.7 461.8 263.4 C462.1 265.0 460.9 268.1 460.8 269.0 M476.2 256.9 C476.0 257.8 476.1 260.5 475.4 262.0 C474.7 263.4 472.7 264.2 471.8 265.5 C470.9 266.9 470.9 269.0 469.9 270.2 C468.8 271.4 466.2 272.3 465.5 272.7 M471.8 265.5 C471.2 265.0 468.9 263.6 468.2 262.1 C467.5 260.6 467.9 257.3 467.8 256.4 M487.0 267.4 C485.9 267.6 482.3 267.6 480.5 268.6 C478.6 269.6 477.7 272.3 475.9 273.3 C474.0 274.3 471.2 273.6 469.4 274.6 C467.6 275.7 465.9 278.8 465.2 279.7 M475.9 273.3 C476.4 274.0 478.5 275.7 478.8 277.4 C479.2 279.0 478.3 282.1 478.2 283.1 M495.0 278.3 C494.3 279.1 492.8 282.0 491.3 283.2 C489.7 284.4 487.0 284.1 485.5 285.4 C484.0 286.6 483.7 289.4 482.2 290.6 C480.7 291.8 477.4 292.3 476.4 292.7 M501.5 288.8 C500.9 289.6 499.4 292.3 497.9 293.4 C496.3 294.6 494.0 294.5 492.4 295.6 C490.8 296.6 489.8 298.6 488.2 299.7 C486.6 300.8 483.7 301.7 482.8 302.1 M492.4 295.6 C492.4 296.4 493.0 299.1 492.4 300.6 C491.7 302.1 489.1 304.1 488.5 304.8 M507.1 301.2 C506.3 301.3 503.7 301.3 502.2 301.9 C500.7 302.5 499.6 304.3 498.1 304.9 C496.6 305.5 494.6 304.9 493.2 305.5 C491.7 306.1 490.7 308.0 489.3 308.7 C487.8 309.4 485.8 309.0 484.4 309.8 C483.0 310.5 481.5 312.8 480.9 313.4 M493.2 305.5 C493.4 306.3 494.8 308.6 494.7 310.3 C494.5 311.9 492.6 314.6 492.2 315.5 M511.1 314.6 C510.5 315.5 508.8 318.5 507.1 319.8 C505.4 321.1 502.7 321.0 500.9 322.2 C499.1 323.4 497.1 326.2 496.4 327.0 M500.9 322.2 C501.1 323.0 502.3 325.4 501.9 327.1 C501.6 328.7 499.5 331.2 499.0 332.0 M515.5 326.3 C514.7 326.4 512.1 326.3 510.4 326.8 C508.8 327.3 507.5 328.8 505.9 329.3 C504.3 329.7 502.3 328.9 500.8 329.5 C499.3 330.1 498.4 332.2 496.9 332.9 C495.4 333.5 492.7 333.3 491.8 333.4 M500.8 329.5 C500.5 328.8 498.8 326.6 498.7 325.0 C498.7 323.3 500.2 320.4 500.5 319.5 M520.8 339.5 C520.0 340.0 517.7 341.9 516.0 342.4 C514.2 342.9 512.1 341.9 510.3 342.4 C508.6 342.9 507.3 344.8 505.5 345.4 C503.8 346.0 501.7 345.5 499.9 346.1 C498.2 346.7 495.9 348.5 495.1 349.0 M522.8 352.2 C521.9 352.0 519.4 350.9 517.6 350.8 C515.9 350.7 514.0 351.5 512.3 351.5 C510.5 351.4 508.7 350.4 507.0 350.5 C505.3 350.7 503.7 352.2 501.9 352.4 C500.2 352.5 497.5 351.7 496.6 351.6 M522.4 366.3 C521.4 366.5 518.3 367.6 516.2 367.6 C514.1 367.5 512.0 366.0 510.0 366.1 C507.9 366.2 505.9 368.1 503.9 368.0 C501.9 368.0 498.9 366.4 497.8 366.1 M520.9 377.5 C519.9 377.6 516.7 378.3 514.8 377.8 C512.9 377.3 511.5 375.1 509.6 374.7 C507.7 374.3 504.6 375.2 503.6 375.3 M509.6 374.7 C509.1 374.0 506.8 372.5 506.3 370.9 C505.8 369.3 506.5 366.1 506.5 365.2 M517.7 389.3 C517.2 388.5 516.3 385.5 515.0 384.2 C513.7 383.0 511.4 382.8 509.8 381.7 C508.3 380.7 507.3 378.5 505.7 377.7 C504.1 376.8 501.0 376.8 500.1 376.6 M509.3 400.6 C508.1 400.6 504.5 401.1 502.5 400.3 C500.4 399.6 499.1 397.0 497.1 396.1 C495.1 395.2 492.4 395.9 490.4 395.0 C488.4 394.1 486.0 391.4 485.2 390.7 M498.2 411.4 C497.8 410.5 497.0 407.5 495.9 406.0 C494.7 404.5 492.6 403.8 491.3 402.3 C490.0 400.9 489.5 398.6 488.1 397.4 C486.6 396.2 483.6 395.4 482.7 395.0 M491.3 402.3 C490.6 402.8 488.7 404.7 487.0 405.0 C485.4 405.3 482.3 404.1 481.4 403.9 M488.5 418.3 C488.4 417.5 488.6 414.7 488.0 413.1 C487.5 411.5 485.5 410.3 485.0 408.7 C484.5 407.1 485.3 405.1 485.0 403.4 C484.6 401.7 483.3 400.3 482.9 398.6 C482.4 396.9 482.5 394.2 482.4 393.3 M477.9 422.3 C478.2 421.4 479.8 418.6 480.0 416.7 C480.3 414.7 479.0 412.6 479.2 410.7 C479.5 408.8 481.6 407.1 481.8 405.2 C481.9 403.3 480.5 400.3 480.2 399.3 M479.2 410.7 C478.4 410.7 475.8 411.6 474.3 411.0 C472.7 410.5 470.5 408.1 469.8 407.5 M465.1 419.9 C464.7 419.0 463.3 416.2 463.1 414.2 C462.8 412.2 464.0 410.1 463.6 408.1 C463.3 406.2 461.2 404.6 461.0 402.7 C460.7 400.8 461.8 397.7 462.0 396.7 M463.6 408.1 C462.9 407.7 460.4 406.7 459.5 405.3 C458.6 403.9 458.4 400.7 458.2 399.8 M338.1 307.5 C338.6 306.8 340.9 304.8 341.5 303.2 C342.1 301.5 341.2 299.4 341.7 297.7 C342.1 296.0 343.9 294.6 344.3 292.8 C344.6 291.1 343.7 288.3 343.6 287.4 M348.1 296.4 C348.9 295.9 351.7 294.7 352.6 293.3 C353.6 291.8 353.7 288.8 354.0 287.9 M352.0 280.4 C352.6 279.6 353.9 277.1 355.3 276.0 C356.7 274.9 359.5 274.1 360.4 273.8 M365.4 273.7 C366.3 273.8 369.2 274.6 370.9 274.2 C372.6 273.8 374.7 271.6 375.4 271.1 M385.2 269.6 C386.0 270.1 388.1 272.1 389.8 272.6 C391.5 273.0 394.4 272.4 395.3 272.4 M402.0 262.3 C402.3 261.4 402.7 258.4 403.8 257.1 C404.9 255.8 407.6 255.7 408.6 254.3 C409.6 253.0 409.6 249.9 409.8 249.0 M432.1 268.2 C432.8 268.8 434.9 271.2 436.5 271.5 C438.2 271.8 440.2 269.8 441.8 270.0 C443.5 270.3 445.7 272.5 446.5 273.0 M446.6 267.6 C447.0 268.4 447.7 271.5 448.9 272.6 C450.2 273.7 452.7 273.3 454.1 274.4 C455.5 275.4 455.9 277.9 457.4 278.8 C458.8 279.7 461.9 279.5 462.8 279.6 M457.6 275.7 C458.4 276.0 461.5 276.3 462.8 277.4 C464.1 278.5 465.1 281.4 465.5 282.2 M465.6 290.9 C465.8 291.8 465.9 294.8 466.8 296.2 C467.7 297.7 469.9 298.4 471.0 299.8 C472.1 301.3 473.0 304.0 473.4 304.8 M478.4 304.9 C478.0 305.7 476.5 308.1 476.1 309.9 C475.7 311.6 476.6 313.6 476.2 315.4 C475.8 317.1 474.1 319.5 473.7 320.3 M484.9 314.3 C485.7 314.8 488.4 316.0 489.5 317.4 C490.6 318.7 490.3 321.3 491.4 322.5 C492.6 323.8 495.6 324.5 496.4 324.8 M491.1 337.0 C490.8 337.9 489.6 340.5 489.5 342.3 C489.3 344.0 490.5 346.1 490.0 347.7 C489.6 349.4 487.3 351.4 486.7 352.1 M498.5 351.0 C497.9 351.7 495.5 353.5 494.8 355.1 C494.2 356.7 495.1 358.8 494.6 360.6 C494.1 362.3 492.2 363.7 492.0 365.4 C491.9 367.1 493.4 369.8 493.7 370.7 M499.1 365.5 C498.3 365.9 495.2 366.6 494.2 367.9 C493.2 369.2 494.0 371.9 493.0 373.3 C492.0 374.7 489.1 375.7 488.3 376.2 M489.8 376.1 C489.7 377.0 489.9 379.9 489.2 381.5 C488.5 383.2 486.3 384.2 485.7 385.8 C485.1 387.5 486.2 389.6 485.7 391.3 C485.2 393.0 483.1 395.1 482.6 395.9 M490.4 385.3 C490.7 386.2 492.1 388.8 492.2 390.5 C492.2 392.3 491.1 395.0 490.9 395.9 M476.9 389.5 C476.2 390.1 474.2 392.6 472.6 393.0 C471.0 393.4 469.0 391.8 467.2 391.9 C465.5 392.1 462.9 393.5 462.0 393.8 M352.0 322.0 C352.2 319.0 351.0 309.2 353.0 304.0 C355.0 298.8 359.5 294.7 364.0 291.0 C368.5 287.3 374.0 284.2 380.0 282.0 C386.0 279.8 393.0 278.3 400.0 277.6 C407.0 276.9 415.0 276.5 422.0 277.6 C429.0 278.7 436.2 280.9 442.0 284.0 C447.8 287.1 452.8 291.3 457.0 296.0 C461.2 300.7 464.8 306.3 467.0 312.0 C469.2 317.7 469.5 327.0 470.0 330.0 M346.0 334.0 C348.0 335.0 353.0 339.0 358.0 340.0 C363.0 341.0 373.0 340.0 376.0 340.0 M470.0 300.0 C471.3 302.0 477.7 308.0 478.0 312.0 C478.3 316.0 474.0 319.7 472.0 324.0 C470.0 328.3 467.0 335.7 466.0 338.0 M468.0 340.0 C470.3 341.0 477.3 345.3 482.0 346.0 C486.7 346.7 491.3 343.3 496.0 344.0 C500.7 344.7 507.7 349.0 510.0 350.0 M486.0 300.0 C487.3 302.0 493.3 307.7 494.0 312.0 C494.7 316.3 489.3 322.0 490.0 326.0 C490.7 330.0 496.7 334.3 498.0 336.0"/>
</g>
<g filter="url(#mb1)" fill="none" stroke="#a6a6a6" stroke-width="1.25" stroke-linecap="round">
<path d="M316.4 317.9 C317.5 318.2 320.9 319.9 323.0 319.7 C325.2 319.6 327.2 317.6 329.4 317.1 C331.5 316.7 335.1 317.0 336.2 317.0 M315.2 304.1 C316.1 303.7 318.9 302.1 320.7 302.0 C322.6 302.0 324.5 303.7 326.4 303.8 C328.2 303.8 330.1 302.5 332.1 302.4 C334.0 302.3 337.0 303.0 337.9 303.1 M318.0 289.5 C318.9 289.4 321.5 288.7 323.3 288.8 C325.0 289.0 326.7 290.0 328.4 290.3 C330.1 290.6 332.1 289.9 333.7 290.4 C335.3 291.0 336.3 293.0 337.9 293.7 C339.5 294.3 342.3 294.2 343.2 294.3 M323.0 278.6 C323.6 279.3 325.2 281.7 326.7 282.6 C328.2 283.6 330.4 283.2 331.9 284.1 C333.5 285.0 334.4 287.0 335.9 287.9 C337.4 288.9 340.1 289.5 341.0 289.8 M332.2 266.6 C333.1 267.0 335.8 268.0 337.3 269.1 C338.8 270.2 339.6 272.2 341.2 273.2 C342.7 274.2 344.9 274.2 346.4 275.2 C348.0 276.1 349.0 278.0 350.5 279.0 C352.0 280.1 354.7 281.2 355.5 281.6 M346.4 275.2 C346.9 274.5 348.0 272.0 349.5 271.2 C351.0 270.4 354.2 270.4 355.2 270.3 M343.6 256.9 C344.0 257.9 344.6 261.5 345.9 263.3 C347.1 265.1 350.3 266.8 351.2 267.5 M355.2 250.5 C355.2 251.4 354.4 254.4 354.9 256.1 C355.4 257.8 357.7 258.9 358.4 260.6 C359.0 262.3 358.7 265.3 358.8 266.3 M358.4 260.6 C359.2 260.8 361.9 260.8 363.2 261.8 C364.5 262.8 365.8 265.8 366.4 266.6 M365.8 246.2 C366.5 247.0 369.1 249.1 370.1 250.8 C371.2 252.6 371.0 255.1 372.1 256.9 C373.3 258.6 375.6 259.5 376.8 261.1 C378.0 262.8 378.9 266.0 379.3 267.0 M376.7 242.8 C376.5 243.7 375.6 246.4 375.6 248.2 C375.6 250.0 376.6 251.8 376.6 253.6 C376.7 255.5 375.5 257.4 375.9 259.1 C376.3 260.8 378.4 263.0 378.9 263.8 M389.5 240.0 C390.2 240.6 392.9 242.2 394.0 243.7 C395.1 245.3 395.0 247.6 395.9 249.3 C396.8 251.0 398.8 253.2 399.4 254.0 M395.9 249.3 C396.7 249.2 399.3 248.4 400.9 248.9 C402.4 249.4 404.6 251.8 405.4 252.4 M403.6 238.0 C404.3 238.8 406.9 240.8 407.8 242.6 C408.6 244.4 408.0 246.9 408.7 248.8 C409.4 250.7 411.6 253.2 412.2 254.0 M415.3 237.3 C415.6 238.4 417.1 241.5 417.3 243.6 C417.6 245.8 416.5 248.1 416.9 250.2 C417.3 252.4 419.2 255.3 419.6 256.3 M429.3 237.2 C429.5 238.0 430.5 240.5 430.6 242.2 C430.8 243.9 429.9 245.7 430.2 247.3 C430.6 248.9 432.3 250.2 432.8 251.8 C433.2 253.4 432.9 256.1 432.9 256.9 M440.5 238.8 C440.7 239.7 442.0 242.5 441.7 244.2 C441.5 245.9 439.7 247.4 439.1 249.1 C438.5 250.9 439.0 253.0 438.3 254.7 C437.7 256.4 435.8 257.6 435.2 259.3 C434.6 261.0 435.0 263.9 435.0 264.9 M451.0 242.5 C450.7 243.5 450.2 246.9 449.2 248.8 C448.2 250.6 446.0 251.8 444.9 253.6 C443.8 255.5 443.0 258.7 442.6 259.7 M444.9 253.6 C444.1 253.7 441.5 254.4 439.9 253.9 C438.4 253.3 436.3 250.8 435.5 250.2 M465.1 249.5 C464.4 250.2 461.7 251.9 460.7 253.5 C459.7 255.1 460.1 257.5 459.1 259.2 C458.2 260.8 455.6 262.6 454.9 263.3 M459.1 259.2 C459.6 259.9 461.5 261.7 461.8 263.4 C462.1 265.0 460.9 268.1 460.8 269.0 M476.2 256.9 C476.0 257.8 476.1 260.5 475.4 262.0 C474.7 263.4 472.7 264.2 471.8 265.5 C470.9 266.9 470.9 269.0 469.9 270.2 C468.8 271.4 466.2 272.3 465.5 272.7 M471.8 265.5 C471.2 265.0 468.9 263.6 468.2 262.1 C467.5 260.6 467.9 257.3 467.8 256.4 M487.0 267.4 C485.9 267.6 482.3 267.6 480.5 268.6 C478.6 269.6 477.7 272.3 475.9 273.3 C474.0 274.3 471.2 273.6 469.4 274.6 C467.6 275.7 465.9 278.8 465.2 279.7 M475.9 273.3 C476.4 274.0 478.5 275.7 478.8 277.4 C479.2 279.0 478.3 282.1 478.2 283.1 M495.0 278.3 C494.3 279.1 492.8 282.0 491.3 283.2 C489.7 284.4 487.0 284.1 485.5 285.4 C484.0 286.6 483.7 289.4 482.2 290.6 C480.7 291.8 477.4 292.3 476.4 292.7 M501.5 288.8 C500.9 289.6 499.4 292.3 497.9 293.4 C496.3 294.6 494.0 294.5 492.4 295.6 C490.8 296.6 489.8 298.6 488.2 299.7 C486.6 300.8 483.7 301.7 482.8 302.1 M492.4 295.6 C492.4 296.4 493.0 299.1 492.4 300.6 C491.7 302.1 489.1 304.1 488.5 304.8 M507.1 301.2 C506.3 301.3 503.7 301.3 502.2 301.9 C500.7 302.5 499.6 304.3 498.1 304.9 C496.6 305.5 494.6 304.9 493.2 305.5 C491.7 306.1 490.7 308.0 489.3 308.7 C487.8 309.4 485.8 309.0 484.4 309.8 C483.0 310.5 481.5 312.8 480.9 313.4 M493.2 305.5 C493.4 306.3 494.8 308.6 494.7 310.3 C494.5 311.9 492.6 314.6 492.2 315.5 M511.1 314.6 C510.5 315.5 508.8 318.5 507.1 319.8 C505.4 321.1 502.7 321.0 500.9 322.2 C499.1 323.4 497.1 326.2 496.4 327.0 M500.9 322.2 C501.1 323.0 502.3 325.4 501.9 327.1 C501.6 328.7 499.5 331.2 499.0 332.0 M515.5 326.3 C514.7 326.4 512.1 326.3 510.4 326.8 C508.8 327.3 507.5 328.8 505.9 329.3 C504.3 329.7 502.3 328.9 500.8 329.5 C499.3 330.1 498.4 332.2 496.9 332.9 C495.4 333.5 492.7 333.3 491.8 333.4 M500.8 329.5 C500.5 328.8 498.8 326.6 498.7 325.0 C498.7 323.3 500.2 320.4 500.5 319.5 M520.8 339.5 C520.0 340.0 517.7 341.9 516.0 342.4 C514.2 342.9 512.1 341.9 510.3 342.4 C508.6 342.9 507.3 344.8 505.5 345.4 C503.8 346.0 501.7 345.5 499.9 346.1 C498.2 346.7 495.9 348.5 495.1 349.0 M522.8 352.2 C521.9 352.0 519.4 350.9 517.6 350.8 C515.9 350.7 514.0 351.5 512.3 351.5 C510.5 351.4 508.7 350.4 507.0 350.5 C505.3 350.7 503.7 352.2 501.9 352.4 C500.2 352.5 497.5 351.7 496.6 351.6 M522.4 366.3 C521.4 366.5 518.3 367.6 516.2 367.6 C514.1 367.5 512.0 366.0 510.0 366.1 C507.9 366.2 505.9 368.1 503.9 368.0 C501.9 368.0 498.9 366.4 497.8 366.1 M520.9 377.5 C519.9 377.6 516.7 378.3 514.8 377.8 C512.9 377.3 511.5 375.1 509.6 374.7 C507.7 374.3 504.6 375.2 503.6 375.3 M509.6 374.7 C509.1 374.0 506.8 372.5 506.3 370.9 C505.8 369.3 506.5 366.1 506.5 365.2 M517.7 389.3 C517.2 388.5 516.3 385.5 515.0 384.2 C513.7 383.0 511.4 382.8 509.8 381.7 C508.3 380.7 507.3 378.5 505.7 377.7 C504.1 376.8 501.0 376.8 500.1 376.6 M509.3 400.6 C508.1 400.6 504.5 401.1 502.5 400.3 C500.4 399.6 499.1 397.0 497.1 396.1 C495.1 395.2 492.4 395.9 490.4 395.0 C488.4 394.1 486.0 391.4 485.2 390.7 M498.2 411.4 C497.8 410.5 497.0 407.5 495.9 406.0 C494.7 404.5 492.6 403.8 491.3 402.3 C490.0 400.9 489.5 398.6 488.1 397.4 C486.6 396.2 483.6 395.4 482.7 395.0 M491.3 402.3 C490.6 402.8 488.7 404.7 487.0 405.0 C485.4 405.3 482.3 404.1 481.4 403.9 M488.5 418.3 C488.4 417.5 488.6 414.7 488.0 413.1 C487.5 411.5 485.5 410.3 485.0 408.7 C484.5 407.1 485.3 405.1 485.0 403.4 C484.6 401.7 483.3 400.3 482.9 398.6 C482.4 396.9 482.5 394.2 482.4 393.3 M477.9 422.3 C478.2 421.4 479.8 418.6 480.0 416.7 C480.3 414.7 479.0 412.6 479.2 410.7 C479.5 408.8 481.6 407.1 481.8 405.2 C481.9 403.3 480.5 400.3 480.2 399.3 M479.2 410.7 C478.4 410.7 475.8 411.6 474.3 411.0 C472.7 410.5 470.5 408.1 469.8 407.5 M465.1 419.9 C464.7 419.0 463.3 416.2 463.1 414.2 C462.8 412.2 464.0 410.1 463.6 408.1 C463.3 406.2 461.2 404.6 461.0 402.7 C460.7 400.8 461.8 397.7 462.0 396.7 M463.6 408.1 C462.9 407.7 460.4 406.7 459.5 405.3 C458.6 403.9 458.4 400.7 458.2 399.8 M338.1 307.5 C338.6 306.8 340.9 304.8 341.5 303.2 C342.1 301.5 341.2 299.4 341.7 297.7 C342.1 296.0 343.9 294.6 344.3 292.8 C344.6 291.1 343.7 288.3 343.6 287.4 M348.1 296.4 C348.9 295.9 351.7 294.7 352.6 293.3 C353.6 291.8 353.7 288.8 354.0 287.9 M352.0 280.4 C352.6 279.6 353.9 277.1 355.3 276.0 C356.7 274.9 359.5 274.1 360.4 273.8 M365.4 273.7 C366.3 273.8 369.2 274.6 370.9 274.2 C372.6 273.8 374.7 271.6 375.4 271.1 M385.2 269.6 C386.0 270.1 388.1 272.1 389.8 272.6 C391.5 273.0 394.4 272.4 395.3 272.4 M402.0 262.3 C402.3 261.4 402.7 258.4 403.8 257.1 C404.9 255.8 407.6 255.7 408.6 254.3 C409.6 253.0 409.6 249.9 409.8 249.0 M432.1 268.2 C432.8 268.8 434.9 271.2 436.5 271.5 C438.2 271.8 440.2 269.8 441.8 270.0 C443.5 270.3 445.7 272.5 446.5 273.0 M446.6 267.6 C447.0 268.4 447.7 271.5 448.9 272.6 C450.2 273.7 452.7 273.3 454.1 274.4 C455.5 275.4 455.9 277.9 457.4 278.8 C458.8 279.7 461.9 279.5 462.8 279.6 M457.6 275.7 C458.4 276.0 461.5 276.3 462.8 277.4 C464.1 278.5 465.1 281.4 465.5 282.2 M465.6 290.9 C465.8 291.8 465.9 294.8 466.8 296.2 C467.7 297.7 469.9 298.4 471.0 299.8 C472.1 301.3 473.0 304.0 473.4 304.8 M478.4 304.9 C478.0 305.7 476.5 308.1 476.1 309.9 C475.7 311.6 476.6 313.6 476.2 315.4 C475.8 317.1 474.1 319.5 473.7 320.3 M484.9 314.3 C485.7 314.8 488.4 316.0 489.5 317.4 C490.6 318.7 490.3 321.3 491.4 322.5 C492.6 323.8 495.6 324.5 496.4 324.8 M491.1 337.0 C490.8 337.9 489.6 340.5 489.5 342.3 C489.3 344.0 490.5 346.1 490.0 347.7 C489.6 349.4 487.3 351.4 486.7 352.1 M498.5 351.0 C497.9 351.7 495.5 353.5 494.8 355.1 C494.2 356.7 495.1 358.8 494.6 360.6 C494.1 362.3 492.2 363.7 492.0 365.4 C491.9 367.1 493.4 369.8 493.7 370.7 M499.1 365.5 C498.3 365.9 495.2 366.6 494.2 367.9 C493.2 369.2 494.0 371.9 493.0 373.3 C492.0 374.7 489.1 375.7 488.3 376.2 M489.8 376.1 C489.7 377.0 489.9 379.9 489.2 381.5 C488.5 383.2 486.3 384.2 485.7 385.8 C485.1 387.5 486.2 389.6 485.7 391.3 C485.2 393.0 483.1 395.1 482.6 395.9 M490.4 385.3 C490.7 386.2 492.1 388.8 492.2 390.5 C492.2 392.3 491.1 395.0 490.9 395.9 M476.9 389.5 C476.2 390.1 474.2 392.6 472.6 393.0 C471.0 393.4 469.0 391.8 467.2 391.9 C465.5 392.1 462.9 393.5 462.0 393.8 M352.0 322.0 C352.2 319.0 351.0 309.2 353.0 304.0 C355.0 298.8 359.5 294.7 364.0 291.0 C368.5 287.3 374.0 284.2 380.0 282.0 C386.0 279.8 393.0 278.3 400.0 277.6 C407.0 276.9 415.0 276.5 422.0 277.6 C429.0 278.7 436.2 280.9 442.0 284.0 C447.8 287.1 452.8 291.3 457.0 296.0 C461.2 300.7 464.8 306.3 467.0 312.0 C469.2 317.7 469.5 327.0 470.0 330.0 M346.0 334.0 C348.0 335.0 353.0 339.0 358.0 340.0 C363.0 341.0 373.0 340.0 376.0 340.0 M470.0 300.0 C471.3 302.0 477.7 308.0 478.0 312.0 C478.3 316.0 474.0 319.7 472.0 324.0 C470.0 328.3 467.0 335.7 466.0 338.0 M468.0 340.0 C470.3 341.0 477.3 345.3 482.0 346.0 C486.7 346.7 491.3 343.3 496.0 344.0 C500.7 344.7 507.7 349.0 510.0 350.0 M486.0 300.0 C487.3 302.0 493.3 307.7 494.0 312.0 C494.7 316.3 489.3 322.0 490.0 326.0 C490.7 330.0 496.7 334.3 498.0 336.0"/>
</g>
<path d="M362.0 316.0 C362.7 314.2 363.3 308.3 366.0 305.0 C368.7 301.7 373.3 298.3 378.0 296.0 C382.7 293.7 388.0 292.0 394.0 291.0 C400.0 290.0 407.3 289.5 414.0 290.0 C420.7 290.5 428.3 291.7 434.0 294.0 C439.7 296.3 444.2 300.0 448.0 304.0 C451.8 308.0 455.0 313.0 457.0 318.0 C459.0 323.0 459.5 331.3 460.0 334.0" fill="none" stroke="#6c6c6c" stroke-width="14" stroke-linecap="round" filter="url(#mb1)"/>
<path d="M362.0 316.0 C362.7 314.2 363.3 308.3 366.0 305.0 C368.7 301.7 373.3 298.3 378.0 296.0 C382.7 293.7 388.0 292.0 394.0 291.0 C400.0 290.0 407.3 289.5 414.0 290.0 C420.7 290.5 428.3 291.7 434.0 294.0 C439.7 296.3 444.2 300.0 448.0 304.0 C451.8 308.0 455.0 313.0 457.0 318.0 C459.0 323.0 459.5 331.3 460.0 334.0" fill="none" stroke="#2f2f2f" stroke-width="9" stroke-linecap="round" filter="url(#mb1)"/>
<path d="M372.0 318.0 C372.0 314.5 378.7 308.1 384.0 305.0 C389.3 301.9 397.3 300.3 404.0 299.6 C410.7 298.9 418.0 299.4 424.0 301.0 C430.0 302.6 435.7 305.5 440.0 309.0 C444.3 312.5 448.0 317.5 450.0 322.0 C452.0 326.5 453.7 332.7 452.0 336.0 C450.3 339.3 445.3 342.7 440.0 342.0 C434.7 341.3 426.7 334.7 420.0 332.0 C413.3 329.3 406.0 327.0 400.0 326.0 C394.0 325.0 388.7 327.3 384.0 326.0 C379.3 324.7 372.0 321.5 372.0 318.0 Z" fill="#6a6a6a" filter="url(#mb1)"/>
<ellipse cx="420" cy="326" rx="21" ry="11" transform="rotate(14 420 326)" fill="#4e4e4e" filter="url(#mb1)"/>
<ellipse cx="374" cy="317" rx="9" ry="4.4" transform="rotate(28 374 317)" fill="#1e1e1e" filter="url(#mb1)"/>
<path d="M386.0 330.0 C388.7 328.7 397.7 332.3 404.0 334.0 C410.3 335.7 417.3 338.0 424.0 340.0 C430.7 342.0 439.3 343.3 444.0 346.0 C448.7 348.7 452.7 353.0 452.0 356.0 C451.3 359.0 445.7 363.7 440.0 364.0 C434.3 364.3 424.7 360.3 418.0 358.0 C411.3 355.7 405.0 352.7 400.0 350.0 C395.0 347.3 390.3 345.3 388.0 342.0 C385.7 338.7 383.3 331.3 386.0 330.0 Z" fill="#5a5a5a" filter="url(#mb1)"/>
</g>
<g clip-path="url(#cHead)">
<path d="M392.0 352.0 C392.8 347.8 398.0 347.3 404.0 347.0 C410.0 346.7 420.0 350.8 428.0 350.0 C436.0 349.2 446.3 344.0 452.0 342.0 C457.7 340.0 457.3 335.3 462.0 338.0 C466.7 340.7 475.0 352.3 480.0 358.0 C485.0 363.7 493.7 366.3 492.0 372.0 C490.3 377.7 476.7 387.7 470.0 392.0 C463.3 396.3 456.2 392.3 452.0 398.0 C447.8 403.7 446.7 417.0 445.0 426.0 C443.3 435.0 442.5 440.3 442.0 452.0 C441.5 463.7 445.5 488.7 442.0 496.0 C438.5 503.3 425.5 503.7 421.0 496.0 C416.5 488.3 417.2 464.3 415.0 450.0 C412.8 435.7 410.7 423.0 408.0 410.0 C405.3 397.0 401.7 381.7 399.0 372.0 C396.3 362.3 391.2 356.2 392.0 352.0 Z" fill="#8c8c8c" filter="url(#mb1)"/>
<ellipse cx="422.5" cy="393" rx="14.5" ry="33" transform="rotate(-7 422.5 393)" fill="#404040" filter="url(#mb1)"/>
<ellipse cx="428" cy="350" rx="15" ry="9" transform="rotate(15 428 350)" fill="#565656" filter="url(#mb1)"/>
<path d="M428.0 420.0 C428.2 423.3 429.0 432.0 429.5 440.0 C430.0 448.0 430.6 458.3 431.0 468.0 C431.4 477.7 431.8 493.0 432.0 498.0" fill="none" stroke="#a2a2a2" stroke-width="9" filter="url(#mb1)"/>
<path d="M444.0 362.0 C446.0 356.2 451.7 354.0 456.0 353.0 C460.3 352.0 465.3 353.2 470.0 356.0 C474.7 358.8 480.2 364.3 484.0 370.0 C487.8 375.7 492.0 383.7 493.0 390.0 C494.0 396.3 492.5 403.0 490.0 408.0 C487.5 413.0 482.7 418.0 478.0 420.0 C473.3 422.0 466.7 422.0 462.0 420.0 C457.3 418.0 453.0 413.3 450.0 408.0 C447.0 402.7 445.0 395.7 444.0 388.0 C443.0 380.3 442.0 367.8 444.0 362.0 Z" fill="#3a3a3a" filter="url(#mb1)"/>
<path d="M450.0 372.0 C452.0 373.3 457.7 378.7 462.0 380.0 C466.3 381.3 471.7 378.7 476.0 380.0 C480.3 381.3 486.0 386.7 488.0 388.0" fill="none" stroke="#8a8a8a" stroke-width="0.9" filter="url(#mb1)"/>
<path d="M448.0 390.0 C450.3 391.0 457.0 395.0 462.0 396.0 C467.0 397.0 473.3 395.0 478.0 396.0 C482.7 397.0 488.0 401.0 490.0 402.0" fill="none" stroke="#8a8a8a" stroke-width="0.9" filter="url(#mb1)"/>
<path d="M456.0 362.0 C457.7 363.7 462.0 370.3 466.0 372.0 C470.0 373.7 477.7 372.0 480.0 372.0" fill="none" stroke="#8a8a8a" stroke-width="0.9" filter="url(#mb1)"/>
<path d="M454.0 408.0 C456.3 408.3 463.3 409.7 468.0 410.0 C472.7 410.3 479.7 410.0 482.0 410.0" fill="none" stroke="#8a8a8a" stroke-width="0.9" filter="url(#mb1)"/>
<path d="M466.0 358.0 C466.3 363.3 468.0 380.0 468.0 390.0 C468.0 400.0 466.3 413.3 466.0 418.0" fill="none" stroke="#8a8a8a" stroke-width="0.9" filter="url(#mb1)"/>
<path d="M459 338 L484 364 L478 368 L458 346 Z" fill="#b4b4b4" filter="url(#mb1)"/>
<path d="M514.0 394.0 C512.3 396.0 508.0 402.2 504.0 406.0 C500.0 409.8 495.7 412.7 490.0 417.0 C484.3 421.3 475.7 427.5 470.0 432.0 C464.3 436.5 459.8 440.7 456.0 444.0 C452.2 447.3 448.5 450.7 447.0 452.0" fill="none" stroke="#060606" stroke-width="7" stroke-linecap="round" filter="url(#mb1)"/>
<path d="M452.0 452.0 C456.7 446.3 466.7 441.0 474.0 436.0 C481.3 431.0 489.3 427.3 496.0 422.0 C502.7 416.7 509.7 408.7 514.0 404.0 C518.3 399.3 521.5 392.2 522.0 394.0 C522.5 395.8 519.8 407.3 517.0 415.0 C514.2 422.7 508.8 431.5 505.0 440.0 C501.2 448.5 496.8 456.7 494.0 466.0 C491.2 475.3 496.0 491.0 488.0 496.0 C480.0 501.0 453.0 500.3 446.0 496.0 C439.0 491.7 445.0 477.3 446.0 470.0 C447.0 462.7 447.3 457.7 452.0 452.0 Z" fill="#383838" filter="url(#mb1)"/>
<path d="M533.0 380.0 C532.0 384.0 529.5 396.0 527.0 404.0 C524.5 412.0 521.2 420.0 518.0 428.0 C514.8 436.0 511.3 444.0 508.0 452.0 C504.7 460.0 500.7 468.0 498.0 476.0 C495.3 484.0 493.0 496.0 492.0 500.0" fill="none" stroke="#868686" stroke-width="12" filter="url(#mb1)"/>
<path d="M524.0 392.0 C522.3 396.7 517.7 410.7 514.0 420.0 C510.3 429.3 505.7 439.0 502.0 448.0 C498.3 457.0 494.7 465.7 492.0 474.0 C489.3 482.3 487.0 494.0 486.0 498.0" fill="none" stroke="#2a2a2a" stroke-width="1.2" filter="url(#mb1)"/>
<path d="M512.0 404.0 C509.7 408.3 502.7 420.7 498.0 430.0 C493.3 439.3 487.7 449.0 484.0 460.0 C480.3 471.0 477.3 490.0 476.0 496.0" fill="none" stroke="#2a2a2a" stroke-width="1" filter="url(#mb1)"/>
<ellipse cx="502" cy="490" rx="9" ry="7" fill="#0a0a0a" filter="url(#mb2)"/>
<path d="M290.0 318.0 C287.0 315.7 297.3 314.0 300.0 316.0 C302.7 318.0 305.3 325.0 306.0 330.0 C306.7 335.0 306.3 341.7 304.0 346.0 C301.7 350.3 296.7 352.7 292.0 356.0 C287.3 359.3 281.0 362.0 276.0 366.0 C271.0 370.0 265.0 375.7 262.0 380.0 C259.0 384.3 258.0 388.3 258.0 392.0 C258.0 395.7 258.3 401.0 262.0 402.0 C265.7 403.0 273.7 400.3 280.0 398.0 C286.3 395.7 293.7 392.3 300.0 388.0 C306.3 383.7 314.0 378.3 318.0 372.0 C322.0 365.7 324.0 357.0 324.0 350.0 C324.0 343.0 323.7 335.3 318.0 330.0 C312.3 324.7 293.0 320.3 290.0 318.0 Z" fill="#383838" filter="url(#mb2)"/>
<path d="M307.5 312.5 C308.5 311.4 310.5 311.9 311.5 313.5 C312.5 315.1 313.1 318.9 313.4 322.0 C313.6 325.1 313.6 329.9 313.0 332.0 C312.4 334.1 310.7 334.8 309.5 334.5 C308.3 334.2 306.6 332.4 306.0 330.0 C305.4 327.6 305.4 322.9 305.6 320.0 C305.9 317.1 306.5 313.6 307.5 312.5 Z" fill="#0a0a0a" filter="url(#mb1)"/>
<path d="M300.0 372.0 C304.0 370.3 314.7 375.7 322.0 378.0 C329.3 380.3 337.7 382.7 344.0 386.0 C350.3 389.3 358.0 394.3 360.0 398.0 C362.0 401.7 360.0 407.0 356.0 408.0 C352.0 409.0 342.7 405.7 336.0 404.0 C329.3 402.3 322.3 400.7 316.0 398.0 C309.7 395.3 300.7 392.3 298.0 388.0 C295.3 383.7 296.0 373.7 300.0 372.0 Z" fill="#464646" filter="url(#mb2)"/>
<path d="M320.0 356.0 C322.3 353.3 330.7 352.0 336.0 352.0 C341.3 352.0 348.0 353.3 352.0 356.0 C356.0 358.7 360.0 364.3 360.0 368.0 C360.0 371.7 356.0 376.7 352.0 378.0 C348.0 379.3 341.0 377.7 336.0 376.0 C331.0 374.3 324.7 371.3 322.0 368.0 C319.3 364.7 317.7 358.7 320.0 356.0 Z" fill="#1a1a1a" filter="url(#mb2)"/>
<ellipse cx="344" cy="378" rx="10" ry="20" transform="rotate(-20 344 378)" fill="#444" filter="url(#mb2)"/>
<path d="M354.0 356.0 C356.3 353.3 363.0 352.0 368.0 352.0 C373.0 352.0 380.0 353.7 384.0 356.0 C388.0 358.3 390.0 362.0 392.0 366.0 C394.0 370.0 396.7 376.3 396.0 380.0 C395.3 383.7 391.7 387.0 388.0 388.0 C384.3 389.0 378.3 387.3 374.0 386.0 C369.7 384.7 365.3 383.0 362.0 380.0 C358.7 377.0 355.3 372.0 354.0 368.0 C352.7 364.0 351.7 358.7 354.0 356.0 Z" fill="#020202" filter="url(#mb1)"/>
<path d="M396.0 356.0 C397.0 359.3 400.0 369.0 402.0 376.0 C404.0 383.0 406.0 390.7 408.0 398.0 C410.0 405.3 413.0 416.3 414.0 420.0" fill="none" stroke="#8e8e8e" stroke-width="6" filter="url(#mb1)"/>
<path d="M288.0 409.0 C290.7 408.3 298.3 405.7 304.0 405.0 C309.7 404.3 319.0 405.0 322.0 405.0" fill="none" stroke="#7a7a7a" stroke-width="3.6" stroke-linecap="round" filter="url(#mb1)"/>
<path d="M254.0 416.0 C257.3 412.0 263.0 409.0 268.0 408.0 C273.0 407.0 281.7 407.3 284.0 410.0 C286.3 412.7 284.3 419.7 282.0 424.0 C279.7 428.3 273.3 431.3 270.0 436.0 C266.7 440.7 263.0 446.0 262.0 452.0 C261.0 458.0 264.7 465.7 264.0 472.0 C263.3 478.3 261.0 486.3 258.0 490.0 C255.0 493.7 248.2 499.0 246.0 494.0 C243.8 489.0 244.7 470.3 245.0 460.0 C245.3 449.7 246.5 439.3 248.0 432.0 C249.5 424.7 250.7 420.0 254.0 416.0 Z" fill="#303030" filter="url(#mb2)"/>
<path d="M284.0 422.0 C288.0 418.0 293.3 414.0 300.0 412.0 C306.7 410.0 316.0 409.3 324.0 410.0 C332.0 410.7 341.0 412.3 348.0 416.0 C355.0 419.7 361.7 425.3 366.0 432.0 C370.3 438.7 373.0 448.0 374.0 456.0 C375.0 464.0 374.3 473.2 372.0 480.0 C369.7 486.8 372.0 494.2 360.0 497.0 C348.0 499.8 313.0 499.5 300.0 497.0 C287.0 494.5 286.3 488.5 282.0 482.0 C277.7 475.5 275.0 465.7 274.0 458.0 C273.0 450.3 274.3 442.0 276.0 436.0 C277.7 430.0 280.0 426.0 284.0 422.0 Z" fill="#1e1e1e" filter="url(#mb2)"/>
<path d="M286.0 426.0 C289.0 424.3 297.3 418.0 304.0 416.0 C310.7 414.0 318.7 413.3 326.0 414.0 C333.3 414.7 341.7 416.3 348.0 420.0 C354.3 423.7 360.3 429.7 364.0 436.0 C367.7 442.3 369.0 454.3 370.0 458.0" fill="none" stroke="#3a3a3a" stroke-width="1.4" filter="url(#mb1)"/>
<g fill="none" stroke="#343434" stroke-width="0.9" filter="url(#mb1)">
<path d="M290 470 Q289 441 300 420"/>
<path d="M290 470 Q298 439 318 416"/>
<path d="M290 470 Q307 440 336 418"/>
<path d="M290 470 Q315 444 352 426"/>
<path d="M290 470 Q321 451 364 440"/>
<path d="M290 470 Q324 460 370 458"/>
<path d="M290 470 Q323 469 368 476"/>
</g>
<path d="M262.0 430.0 C263.3 432.7 266.3 440.7 270.0 446.0 C273.7 451.3 280.7 456.3 284.0 462.0 C287.3 467.7 290.0 474.7 290.0 480.0 C290.0 485.3 285.0 491.7 284.0 494.0" fill="none" stroke="#444" stroke-width="1.6" filter="url(#mb1)"/>
<path d="M288.0 412.0 C290.7 409.8 296.3 409.3 300.0 409.0 C303.7 408.7 309.3 408.8 310.0 410.0 C310.7 411.2 307.0 414.3 304.0 416.0 C301.0 417.7 295.3 419.0 292.0 420.0 C288.7 421.0 284.7 423.3 284.0 422.0 C283.3 420.7 285.3 414.2 288.0 412.0 Z" fill="#555" filter="url(#mb1)"/>
<path d="M362.0 392.0 C363.7 394.0 369.0 398.7 372.0 404.0 C375.0 409.3 378.0 416.3 380.0 424.0 C382.0 431.7 382.7 440.7 384.0 450.0 C385.3 459.3 387.0 472.2 388.0 480.0 C389.0 487.8 389.7 494.2 390.0 497.0" fill="none" stroke="#0a0a0a" stroke-width="7" stroke-linecap="round" filter="url(#mb1)"/>
<path d="M326.0 406.0 C329.0 406.7 338.3 407.7 344.0 410.0 C349.7 412.3 356.0 416.0 360.0 420.0 C364.0 424.0 366.7 431.7 368.0 434.0" fill="none" stroke="#4a4a4a" stroke-width="5" stroke-linecap="round" filter="url(#mb1)"/>
<path d="M394.0 400.0 C397.3 399.7 404.3 407.3 408.0 414.0 C411.7 420.7 414.0 430.7 416.0 440.0 C418.0 449.3 418.7 460.5 420.0 470.0 C421.3 479.5 428.0 492.5 424.0 497.0 C420.0 501.5 401.3 501.5 396.0 497.0 C390.7 492.5 393.0 479.5 392.0 470.0 C391.0 460.5 390.7 449.0 390.0 440.0 C389.3 431.0 387.3 422.7 388.0 416.0 C388.7 409.3 390.7 400.3 394.0 400.0 Z" fill="#323232" filter="url(#mb1)"/>
<ellipse cx="402" cy="438" rx="4" ry="6" fill="#8a8a8a" filter="url(#mb1)"/><ellipse cx="403" cy="438" rx="2" ry="3.6" fill="#2a2a2a" filter="url(#mb1)"/>
<ellipse cx="408" cy="470" rx="9" ry="12" fill="#3a3a3a" filter="url(#mb2)"/>
<path d="M270.0 440.0 C271.7 442.7 278.0 450.3 280.0 456.0 C282.0 461.7 282.7 468.3 282.0 474.0 C281.3 479.7 277.0 487.3 276.0 490.0" fill="none" stroke="#4a4a4a" stroke-width="4" filter="url(#mb2)"/>
</g>
</g></g>
<line x1="364.8" y1="308.8" x2="458.5" y2="336.5" stroke="#20e020" stroke-width="1.6"/>
<line x1="366.8" y1="311.4" x2="376.2" y2="320.8" stroke="#ffffff" stroke-width="1" stroke-dasharray="1.1 1.6"/>
<rect x="363.2" y="307.2" width="3.2" height="3.2" fill="#fff"/><rect x="456.9" y="334.9" width="3.2" height="3.2" fill="#fff"/>
<text x="326" y="333" font-family="Liberation Sans, sans-serif" font-size="13.6" fill="#20e020" stroke="#20e020" stroke-width="0.25" textLength="46.2" lengthAdjust="spacingAndGlyphs">7.32 cm</text>
</svg><!--MRI-END-->
    <!-- frame lines -->
    <div class="ln" style="left:0;top:0;width:799px;height:1px;background:#858585"></div>
    <div class="ln" style="left:0;top:321px;width:799px;height:1px;background:#8e8e8e"></div>
    <div class="ln" style="left:1px;top:0;width:0.8px;height:322px;background:#a0a0a0"></div>
    <div class="ln" style="left:1px;top:1px;width:159.5px;height:1px;background:#a25a0e"></div>
    <div class="ln" style="left:2.1px;top:1px;width:0.9px;height:159px;background:#a25a0e"></div>
    <div class="ln" style="left:797px;top:161px;width:1px;height:160px;background:#a25a0e"></div>
    <div class="ln" style="left:638px;top:320px;width:160px;height:1px;background:#a25a0e"></div>
    <!-- small corner icons -->
    <svg class="abs" style="left:774px;top:308px" width="24" height="12" viewBox="0 0 24 12">
      <g fill="none" stroke="#8a8a8a" stroke-width="0.6"><rect x="1.7" y="2" width="8.3" height="8.3"/><path d="M5.85 2 V10.3 M1.7 6.15 H10"/></g>
      <rect x="14" y="1.6" width="7.2" height="8.8" fill="#6e6e6e"/><path d="M14 4 H21.2 M14 6.4 H21.2" stroke="#555" stroke-width="0.5"/>
      <path d="M18 6.5 L18 10.6 L19.2 9.6 L20.4 11.2 L21.1 10.7 L20 9.2 L21.4 9 Z" fill="#f4f4f4"/>
    </svg>
  </div>
  <div id="toolbar">
    <div class="ln" style="left:0;top:-0.6px;width:799px;height:1.2px;background:#0a0a0a"></div>
    <svg class="abs" style="left:0;top:0" width="799" height="29" viewBox="5 502.6 799 29">
      <!-- tools (orange) -->
      <g stroke="#e07a10" fill="none">
        <path d="M13.2 516.4 L21.2 524.2" stroke-width="2.6" stroke-linecap="round"/>
        <path d="M11.6 524.6 L22.6 515.4" stroke-width="2.6" stroke-linecap="round"/>
        <path d="M11.9 512.3 A2.7 2.7 0 1 1 9.3 514.9" stroke-width="2"/>
        <path d="M16.6 513.4 C19.6 511.6 23 512.6 24.6 515.6" stroke-width="2"/>
        <path d="M24.2 516 L25.4 518.2" stroke-width="2.6"/>
      </g>
      <circle cx="21.7" cy="524.7" r="0.6" fill="#f3d9bd"/>
      <path d="M23.6 511 H29.3 L26.45 507.9 Z" fill="#e07a10"/>
      <rect x="30.9" y="505" width="0.7" height="24" fill="#2c2c2c"/>
      <!-- MPR -->
      <circle cx="46.6" cy="517.3" r="10" fill="#86878b" stroke="#ececec" stroke-width="1.1"/>
      <text x="46.5" y="520.5" font-family="Liberation Sans, sans-serif" font-size="9" font-weight="bold" fill="#fafafa" text-anchor="middle" textLength="16.6" lengthAdjust="spacingAndGlyphs">MPR</text>
      <!-- mouse -->
      <g fill="none" stroke="#e8e8e8" stroke-width="1">
        <rect x="67.2" y="508.8" width="13.2" height="17" rx="6.4" ry="6.6"/>
        <path d="M67.2 516.3 C70 517.6 77.6 517.6 80.4 516.3 M73.8 508.8 V516.8"/>
      </g>
      <path d="M68.2 515.6 C68.2 511.5 70 509.6 73.2 509.5 V516.5 Z" fill="#cfcfcf"/>
      <!-- zoom + -->
      <g fill="none" stroke="#f0f0f0">
        <circle cx="97.4" cy="515" r="5.6" stroke-width="1.5"/>
        <path d="M101.6 519.4 L107.6 525" stroke-width="2" stroke-linecap="round"/>
        <path d="M94.6 515 H100.2 M97.4 512.2 V517.8" stroke-width="1.5"/>
      </g>
      <rect x="119.2" y="509.6" width="0.9" height="15" fill="#9a9a9a"/>
      <!-- grid 1 -->
      <g fill="#f2f2f2" stroke="#8c8c8c" stroke-width="0.7">
        <rect x="131" y="509.4" width="7.3" height="7.2"/><rect x="140.4" y="509.4" width="7.3" height="7.2"/>
        <rect x="131" y="518.3" width="7.3" height="7.2"/><rect x="140.4" y="518.3" width="7.3" height="7.2"/>
      </g>
      <!-- grid 2 (prev) -->
      <rect x="158.6" y="509.2" width="13.6" height="14.6" fill="none" stroke="#bdbdbd" stroke-width="0.8"/>
      <g fill="#f2f2f2"><rect x="160.6" y="511" width="4.2" height="4.4"/><rect x="166.4" y="511" width="4.2" height="4.4"/><rect x="166.4" y="517" width="4.2" height="4.4"/></g>
      <ellipse cx="161.6" cy="521.2" rx="4.3" ry="3" fill="#1a1a1a" stroke="#f2f2f2" stroke-width="1"/><path d="M163.2 519.6 V522.8 L159.6 521.2 Z" fill="#f2f2f2"/>
      <path d="M163 525.3 H169" stroke="#e0e0e0" stroke-width="1"/>
      <!-- grid 3 (next) -->
      <rect x="185.4" y="509.2" width="13.6" height="14.6" fill="none" stroke="#bdbdbd" stroke-width="0.8"/>
      <g fill="#f2f2f2"><rect x="187.2" y="511" width="4.2" height="4.4"/><rect x="193" y="511" width="4.2" height="4.4"/><rect x="187.2" y="517" width="4.2" height="4.4"/></g>
      <ellipse cx="196.4" cy="521.2" rx="4.3" ry="3" fill="#1a1a1a" stroke="#f2f2f2" stroke-width="1"/><path d="M194.8 519.6 V522.8 L198.4 521.2 Z" fill="#f2f2f2"/>
      <path d="M189 525.3 H195" stroke="#e0e0e0" stroke-width="1"/>
      <rect x="211" y="509.6" width="0.9" height="15" fill="#9a9a9a"/>
      <!-- prev / next -->
      <g fill="none" stroke="#e8e8e8" stroke-width="0.9"><circle cx="231.3" cy="517.3" r="8.3"/><circle cx="257.7" cy="517.3" r="8.3"/></g>
      <path d="M234 513.4 V521.2 L227.4 517.3 Z M255 513.4 V521.2 L261.6 517.3 Z" fill="#f4f4f4"/>
      <rect x="277" y="509.6" width="0.9" height="15" fill="#9a9a9a"/>
      <!-- annotation icon -->
      <g fill="#f4f4f4">
        <path d="M290.6 513.6 L293.8 509.2 L297 513.6 H295.4 V523.6 H292.2 V513.6 Z"/>
        <circle cx="301" cy="511.8" r="2.3"/>
        <path d="M297.4 517.6 L301 514.8 L304.8 517.6 L303.6 523.6 H298.4 Z"/>
      </g>
      <path d="M290.4 525.6 l1 -1 l1 1 l1 -1 l1 1 l1 -1 l1 1 l1 -1 l1 1 l1 -1 l1 1 l1 -1 l1 1 l1 -1 l1 1" stroke="#e0e0e0" stroke-width="0.5" fill="none"/>
      <!-- ruler icon -->
      <g>
        <path d="M315.6 510.4 L316.6 509.6 L324.6 518 L323.2 519.4 Z" fill="#f4f4f4"/>
        <path d="M323 517.6 L325.6 520.6 L323.4 519.6Z" fill="#f4f4f4"/>
        <rect x="313.8" y="520" width="19.4" height="5" fill="#f4f4f4"/>
        <path d="M316.5 520 v2.2 M319 520 v3 M321.5 520 v2.2 M324 520 v3 M326.5 520 v2.2 M329 520 v3 M331 520 v2.2" stroke="#1a1a1a" stroke-width="0.7"/>
      </g>
      <!-- circle icon -->
      <circle cx="349.6" cy="517.2" r="7.6" fill="none" stroke="#f4f4f4" stroke-width="2.6"/>
      <path d="M343 511 L345.2 513.2 M356.2 511 L354 513.2 M343 523.4 L345.2 521.2 M356.2 523.4 L354 521.2" stroke="#1a1a1a" stroke-width="0.9"/>
      <rect x="369" y="509.6" width="0.9" height="15" fill="#9a9a9a"/>
      <!-- clock/user icon -->
      <circle cx="389.2" cy="517.3" r="8.9" fill="none" stroke="#e8e8e8" stroke-width="0.9"/>
      <g stroke="#e0e0e0" stroke-width="0.7"><path d="M389.2 509.4 V511.2 M389.2 523.4 V525.2 M381.3 517.3 H383.1 M395.3 517.3 H397.1 M383.6 511.7 L384.8 512.9 M394.8 511.7 L393.6 512.9 M383.6 522.9 L384.8 521.7 M394.8 522.9 L393.6 521.7"/></g>
      <path d="M393.8 513 L389.6 517 L394.4 522.6" stroke="#f4f4f4" stroke-width="1.1" fill="none"/>
      <circle cx="386.6" cy="515.4" r="1.7" fill="#f4f4f4"/><path d="M383.6 520.2 C383.8 517.6 389.4 517.6 389.6 520.2 Z" fill="#f4f4f4"/>
      <!-- chat icon -->
      <path d="M772.3 513 V525.5 Q772.3 527.6 774.5 527.6 H787" stroke="#f7931e" stroke-width="1" fill="none"/>
      <path d="M781.4 506.5 H792.5 Q794.6 506.5 794.6 508.6 V519" stroke="#8c8c8c" stroke-width="1" fill="none"/>
      <path d="M776.2 513.2 L777.6 514 C779 511.4 788.4 511.4 789.8 514 L791.4 513.2 L791.5 519.2 C791.2 521.6 787 522.6 781.6 522.3 L777.4 524.2 L778.6 522 C776.6 521.4 776 520 776 518.6 Z" fill="#f7931e"/>
      <rect x="778.2" y="516.4" width="10.8" height="3.1" rx="1.5" fill="#fff"/>
      <circle cx="779.8" cy="518" r="0.9" fill="#f7931e"/><circle cx="787.4" cy="518" r="0.9" fill="#f7931e"/>
      <path d="M798.4 507.1 H803.6 L801 510.8 Z" fill="#f4f4f4"/>
    </svg>
  </div>
</div>

<!-- ================= CONTEXT MENU ================= -->
<div class="menu" style="left:22px;top:191px;width:101.4px;height:183.2px"></div>
<div class="abs" style="left:23px;top:225.2px;width:99.6px;height:0.9px;background:#a2a2a2"></div>
<div class="abs" style="left:23px;top:275.8px;width:99.6px;height:0.9px;background:#a2a2a2"></div>
<div class="abs" style="left:23px;top:309.2px;width:99.6px;height:0.9px;background:#a2a2a2"></div>
<div class="abs" style="left:22.5px;top:258.3px;width:100.4px;height:15.6px;background:#6e6e6e;border:0.8px solid #3a74b4;box-sizing:border-box"></div>
<div class="abs" style="left:22px;top:291.8px;width:101.4px;height:16px;background:#828282"></div>
<div class="mt" style="left:43.1px;top:196.1px;color:#ececec">Mouse Left Action</div><svg class="abs" style="left:117.2px;top:197.2px" width="3" height="5" viewBox="0 0 3 5"><path d="M0.3 0.6 L2.6 2.5 L0.3 4.4 Z" fill="#f4f4f4"/></svg>
<div class="mt" style="left:43.1px;top:212.1px;color:#ececec">Reset</div>
<div class="mt" style="left:43.1px;top:229.9px;color:#ececec">Processing</div><svg class="abs" style="left:117.2px;top:231.4px" width="3" height="5" viewBox="0 0 3 5"><path d="M0.3 0.6 L2.6 2.5 L0.3 4.4 Z" fill="#f4f4f4"/></svg>
<div class="mt" style="left:43.1px;top:245.8px;color:#ececec">Annotations</div><svg class="abs" style="left:117.2px;top:247.3px" width="3" height="5" viewBox="0 0 3 5"><path d="M0.3 0.6 L2.6 2.5 L0.3 4.4 Z" fill="#f4f4f4"/></svg>
<div class="mt" style="left:43.1px;top:261.9px;color:#ececec">Measurements</div><svg class="abs" style="left:117.2px;top:263.4px" width="3" height="5" viewBox="0 0 3 5"><path d="M0.3 0.6 L2.6 2.5 L0.3 4.4 Z" fill="#f4f4f4"/></svg>
<div class="mt" style="left:43.1px;top:280.1px;color:#ececec">Window Presets</div><svg class="abs" style="left:117.2px;top:281.6px" width="3" height="5" viewBox="0 0 3 5"><path d="M0.3 0.6 L2.6 2.5 L0.3 4.4 Z" fill="#f4f4f4"/></svg>
<div class="mt" style="left:43.1px;top:295.6px;color:#9e9e9e;letter-spacing:-0.1px">Position Synchronization</div>
<div class="mt" style="left:43.1px;top:314.0px;color:#ececec">Export Images To</div><svg class="abs" style="left:117.2px;top:315.5px" width="3" height="5" viewBox="0 0 3 5"><path d="M0.3 0.6 L2.6 2.5 L0.3 4.4 Z" fill="#f4f4f4"/></svg>
<div class="mt" style="left:43.1px;top:330.0px;color:#ececec">Upload to Series..</div><svg class="abs" style="left:117.2px;top:331.5px" width="3" height="5" viewBox="0 0 3 5"><path d="M0.3 0.6 L2.6 2.5 L0.3 4.4 Z" fill="#f4f4f4"/></svg>
<div class="mt" style="left:43.1px;top:346.0px;color:#ececec">Key Image Notes</div><svg class="abs" style="left:117.2px;top:347.5px" width="3" height="5" viewBox="0 0 3 5"><path d="M0.3 0.6 L2.6 2.5 L0.3 4.4 Z" fill="#f4f4f4"/></svg>
<div class="mt" style="left:43.1px;top:361.6px;color:#ececec">Share Selected Images Va..</div><svg class="abs" style="left:117.2px;top:363.1px" width="3" height="5" viewBox="0 0 3 5"><path d="M0.3 0.6 L2.6 2.5 L0.3 4.4 Z" fill="#f4f4f4"/></svg>
<svg class="abs" style="left:22px;top:191px" width="22" height="184" viewBox="22 191 22 184">
  <g fill="none" stroke="#f0f0f0" stroke-width="0.8">
    <!-- mouse -->
    <rect x="27.2" y="195" width="8" height="10.4" rx="3.9" ry="4"/><path d="M27.2 199.4 C29 200.2 33.4 200.2 35.2 199.4 M31.2 195 V199.9"/>
    <!-- reset -->
    <path d="M28.9 213.4 A3.5 3.5 0 1 0 31.6 212.3" stroke-width="1.35"/>
    <!-- processing circle -->
    <circle cx="31" cy="233.8" r="4.1" stroke-width="1.5"/>
    <!-- crosshair disabled -->
    <g stroke="#9a9a9a" stroke-width="0.7"><circle cx="30.6" cy="299.8" r="2.6"/><path d="M30.6 295.6 V298 M30.6 301.6 V304 M26.4 299.8 H28.8 M32.4 299.8 H34.8"/></g>
    <!-- export -->
    <path d="M28.6 314.8 A3.6 3.6 0 0 0 28.2 321" stroke-width="1.1"/><path d="M29.6 322 A3.6 3.6 0 0 0 32 321.8" stroke-width="1.1"/>
    <!-- upload -->
    <path d="M28.6 330.8 A3.6 3.6 0 0 0 28.2 337" stroke-width="1.1"/><path d="M29.6 338 A3.6 3.6 0 0 0 32 337.8" stroke-width="1.1"/>
    <!-- share -->
    <path d="M28.2 363.6 A3.3 3.3 0 0 1 31.2 361.6 M33.8 367.4 A3.3 3.3 0 0 1 30.8 369.6 M28 366.6 A3.3 3.3 0 0 0 29 368.8 M34 364.6 A3.3 3.3 0 0 0 33 362.6" stroke-width="1.1"/>
  </g>
  <path d="M27.6 198.8 C27.6 196.6 29 195.4 30.8 195.4 V199.6 Z" fill="#bdbdbd"/>
  <path d="M31.9 210.6 L29.2 212.6 L32 214.2 Z" fill="#f0f0f0"/>
  <!-- annotations -->
  <g fill="#f0f0f0"><path d="M26.6 247.8 L28.4 245.4 L30.2 247.8 H29.3 V253.6 H27.5 V247.8 Z"/><circle cx="32.6" cy="246.8" r="1.4"/><path d="M30.4 250.2 L32.6 248.6 L34.9 250.2 L34.2 253.6 H31 Z"/></g>
  <!-- measurements icon -->
  <g fill="#f0f0f0"><path d="M26.6 262 L27.2 261.4 L32.4 266.6 L31.6 267.6 Z"/><rect x="25.6" y="267.8" width="11" height="2.6"/></g>
  <path d="M27.4 267.8 v1.3 M29.2 267.8 v1.6 M31 267.8 v1.3 M32.8 267.8 v1.6 M34.6 267.8 v1.3" stroke="#555" stroke-width="0.5"/>
  <!-- window presets -->
  <g fill="#e6e6e6"><path d="M27.6 279.6 H36 V287 H35 V280.8 H27.6 Z"/><rect x="25.8" y="281.6" width="8.4" height="6.6"/></g>
  <rect x="26.6" y="283.6" width="6.8" height="3.8" fill="#4d4d4d"/><rect x="27.2" y="284.4" width="2.2" height="2.2" fill="#e6e6e6"/><rect x="30.2" y="284.4" width="2.4" height="2.2" fill="#e6e6e6"/>
  <!-- export disk -->
  <rect x="29.8" y="313.4" width="6.2" height="5.6" rx="0.8" fill="#f0f0f0"/><rect x="31.2" y="313.9" width="3.2" height="1.8" fill="#4d4d4d"/><rect x="31.4" y="316.8" width="3" height="1.6" fill="#4d4d4d"/>
  <path d="M27 320.6 L28.2 322.8 L29.8 320.6 Z" fill="#f0f0f0"/>
  <!-- upload db -->
  <path d="M30 330.2 C30 328.8 36 328.8 36 330.2 V334.2 C36 335.6 30 335.6 30 334.2 Z" fill="#d9d9d9"/><ellipse cx="33" cy="330.2" rx="3" ry="1" fill="#f4f4f4"/>
  <path d="M27 336.6 L28.2 338.8 L29.8 336.6 Z" fill="#f0f0f0"/>
  <!-- K -->
  <text x="26.8" y="353.4" font-family="Liberation Sans, sans-serif" font-weight="bold" font-size="9.6" fill="#f4f4f4" textLength="7.2" lengthAdjust="spacingAndGlyphs">K</text>
  <!-- share arrows heads -->
  <path d="M30.6 360.4 L32.6 361.8 L30.6 363 Z M31.4 368.2 L29.4 369.6 L31.4 370.8 Z" fill="#f0f0f0"/>
</svg>
<div class="menu" style="left:123.5px;top:258px;width:86.4px;height:225.4px"></div>
<div class="abs" style="left:124.4px;top:465px;width:84.6px;height:0.9px;background:#a2a2a2"></div>
<div class="abs" style="left:124px;top:466.6px;width:85.4px;height:16.6px;background:#6e6e6e;border:0.8px solid #3a74b4;box-sizing:border-box"></div>
<div class="mt" style="left:144.9px;top:262.3px;color:#e8e8e8">Ruler</div>
<div class="mt" style="left:144.9px;top:278.0px;color:#e8e8e8">Poly Ruler</div>
<div class="mt" style="left:144.9px;top:293.9px;color:#e8e8e8">Rectangle Area</div>
<div class="mt" style="left:144.9px;top:309.9px;color:#e8e8e8">Ellipse Area</div>
<div class="mt" style="left:144.9px;top:325.7px;color:#e8e8e8">Circle Area</div><svg class="abs" style="left:202.6px;top:327.2px" width="3" height="5" viewBox="0 0 3 5"><path d="M0.3 0.6 L2.6 2.5 L0.3 4.4 Z" fill="#f4f4f4"/></svg>
<div class="mt" style="left:144.9px;top:341.5px;color:#e8e8e8">FreeHand Area</div>
<div class="mt" style="left:144.9px;top:357.3px;color:#e8e8e8">Cross Product</div>
<div class="mt" style="left:144.9px;top:373.2px;color:#e8e8e8">Vertebral Heart Scale</div>
<div class="mt" style="left:144.9px;top:389.0px;color:#e8e8e8">CTR</div>
<div class="mt" style="left:144.9px;top:404.8px;color:#e8e8e8">Cobb Angle</div>
<div class="mt" style="left:144.9px;top:420.7px;color:#e8e8e8">4 point Angle</div>
<div class="mt" style="left:144.9px;top:436.4px;color:#e8e8e8">Angle</div>
<div class="mt" style="left:144.9px;top:452.3px;color:#e8e8e8">Delete Selected</div>
<div class="mt" style="left:144.9px;top:470.4px;color:#e8e8e8">Calibrate Image</div>
<svg class="abs" style="left:123.5px;top:258px" width="20" height="226" viewBox="123.5 258 20 226">
  <!-- ruler -->
  <path d="M126 270 L136.2 261 L138.4 263.6 L128.2 272.6 Z" fill="#f39a1f"/>
  <path d="M128.4 269 l0.9 1 M130.2 267.4 l0.9 1 M132 265.8 l0.9 1 M133.8 264.2 l0.9 1" stroke="#c8720a" stroke-width="0.5"/>
  <!-- poly ruler -->
  <path d="M126.2 280 L128.4 277.6 L131.8 277.4 L133.4 279.4 L130 283.6 L127.2 283.4 Z" fill="#1e1e1e"/>
  <path d="M128.2 287.4 L136.8 278.6 L138.8 280.8 L130.4 289.8 Z" fill="#f39a1f"/>
  <!-- rectangle area -->
  <path d="M127 302.4 V293.6 H136.6" stroke="#1c1c1c" stroke-width="1" fill="none"/>
  <path d="M127 304.6 L138.2 297.6 L138.2 299.6 L127.4 306.4 Z" fill="#ececec"/><path d="M127 302.8 L138.2 295.6 L138.2 297.6 L127 304.6 Z" fill="#7a5c40"/>
  <!-- ellipse area -->
  <path d="M127.2 318 C126.4 313 131 309.4 137.4 311.6" stroke="#1c1c1c" stroke-width="1" fill="none"/>
  <path d="M127.4 320.6 L138.2 313.8 L138.2 315.8 L127.8 322.4 Z" fill="#ececec"/><path d="M127.2 318.8 L138.2 311.8 L138.2 313.8 L127.4 320.6 Z" fill="#7a5c40"/>
  <!-- circle area -->
  <path d="M127.2 333.8 C126.4 328.8 131 325.2 137.4 327.4" stroke="#1c1c1c" stroke-width="1" fill="none"/>
  <path d="M127.4 336.4 L138.2 329.6 L138.2 331.6 L127.8 338.2 Z" fill="#ececec"/><path d="M127.2 334.6 L138.2 327.6 L138.2 329.6 L127.4 336.4 Z" fill="#7a5c40"/>
  <!-- freehand -->
  <path d="M127 343.6 L130.4 343 L131.8 340.6 L133.6 343 L137.6 343.4 L135.4 346 L136.4 349.2 L133.6 348.6 L132.4 350.6 L130.4 350.4 L130.8 347.8 L127.8 346.4 Z" fill="#f39a1f"/>
  <!-- cross product -->
  <path d="M131.6 355.2 L132.3 356.8 V360.6 H136.6 L138 359.8 V362.8 L136.6 362 H132.3 V365.6 L133 367.2 H130.2 L130.9 365.6 V362 H127.4 L126 362.8 V359.8 L127.4 360.6 H130.9 V356.8 L130.2 355.2 Z" fill="#f39a1f"/>
  <!-- paw -->
  <g fill="#f39a1f"><ellipse cx="132" cy="380.2" rx="4.4" ry="3.3"/><circle cx="127.4" cy="376" r="1.5"/><circle cx="130.3" cy="373.2" r="1.5"/><circle cx="133.8" cy="373.2" r="1.5"/><circle cx="136.7" cy="376" r="1.5"/></g>
  <!-- cobb angle -->
  <g fill="#dcdcdc"><rect x="128.4" y="403.2" width="4.6" height="2" transform="rotate(-18 130.7 404.2)"/><rect x="128.8" y="406.4" width="4.6" height="2" transform="rotate(-6 131 407.4)"/><rect x="128.8" y="409.6" width="4.6" height="2" transform="rotate(8 131 410.6)"/><rect x="128.2" y="412.6" width="4.6" height="2" transform="rotate(20 130.5 413.6)"/></g>
  <path d="M127 403.4 L136.4 406 M127 415 L136.6 411.4 M134.4 404.4 L134.8 413.4" stroke="#f39a1f" stroke-width="0.8" fill="none"/>
  <!-- 4 point angle -->
  <g fill="#dcdcdc"><rect x="128.6" y="419.4" width="4.2" height="2" transform="rotate(-16 130.7 420.4)"/><rect x="129" y="422.6" width="4.2" height="2" transform="rotate(-4 131 423.6)"/><rect x="129" y="425.8" width="4.2" height="2" transform="rotate(8 131 426.8)"/><rect x="128.4" y="428.8" width="4.2" height="2" transform="rotate(18 130.5 429.8)"/></g>
  <path d="M127.6 419.4 L134.6 422 L134.4 428 L127.6 431.4" stroke="#f39a1f" stroke-width="0.8" fill="none"/>
  <!-- angle -->
  <path d="M127.6 445 L129 436.6 L137.4 436.2 C137.6 440.4 133 444.8 127.6 445 Z" fill="none" stroke="#f39a1f" stroke-width="1.5"/>
  <!-- delete selected -->
  <path d="M126.6 459.6 L135.2 451.4 L137.6 453.8 L129 462 Z" fill="#f39a1f"/><path d="M126.6 459.6 L128.6 457.6 L131 460 L129 462 Z" fill="#f6f6f6"/>
  <path d="M131 455.6 l2.2 2.2 M133.2 455.6 l-2.2 2.2" stroke="#7a3a00" stroke-width="0.6"/>
</svg>

<!-- ================= DIALOG ================= -->
<div id="dlg">
  <div class="abs" style="left:0;top:0;width:146px;height:12.6px;background:linear-gradient(#747474,#585858)"></div>
  <div class="abs" style="left:0;top:12.4px;width:146px;height:1px;background:#c47a1e"></div>
  <div class="abs" style="left:0;top:2.6px;width:146px;text-align:center;font-weight:bold;font-size:6.56px;line-height:8px;color:#fff">Image Calibration</div>
  <svg class="abs" style="left:135.6px;top:2.2px" width="9" height="9" viewBox="0 0 9 9"><circle cx="4.4" cy="4.4" r="3.9" fill="#f6f6f6"/><path d="M2.8 2.8 L6 6 M6 2.8 L2.8 6" stroke="#4a4a4a" stroke-width="1.1"/></svg>
  <!-- warning -->
  <svg class="abs" style="left:5px;top:19.2px" width="11" height="10" viewBox="0 0 11 10"><path d="M5.4 0.8 L10.2 9 H0.6 Z" fill="#f4c20d" stroke="#a07800" stroke-width="0.5" stroke-linejoin="round"/><path d="M5.4 3.4 V6.2" stroke="#2a2a2a" stroke-width="1"/><circle cx="5.4" cy="7.5" r="0.55" fill="#2a2a2a"/></svg>
  <div class="t" style="left:19px;top:19.3px;line-height:7.4px">Warning: The calibration data is already<br>present in the source DICOM file.</div>
  <div class="step" style="top:43.2px">Step 1</div>
  <div class="t" style="left:5.8px;top:58.1px;line-height:7.7px">Draw a line segment that corresponds to a<br>known physical length using the left mouse<br>button.</div>
  <div class="abs" style="left:1px;top:87.6px;width:144px;height:0.8px;background:#8e8e8e"></div>
  <div class="step" style="top:91.6px">Step 2</div>
  <div class="t" style="left:5.8px;top:105.6px;line-height:7.9px">Enter the corresponding physical length of the<br>segment you just drawn.</div>
  <!-- input -->
  <div class="abs" style="left:22.8px;top:130.8px;width:50.2px;height:9.4px;background:#fff"></div>
  <div class="abs" style="left:23.4px;top:131.4px;font-size:6.3px;line-height:8px;color:#222">6.99</div>
  <svg class="abs" style="left:67px;top:130.8px" width="6" height="9.4" viewBox="0 0 6 9.4"><rect width="6" height="9.4" fill="#e4e4e4"/><path d="M1.7 3.4 L3 1.8 L4.3 3.4 Z M1.7 6 L3 7.6 L4.3 6 Z" fill="#333"/></svg>
  <!-- select -->
  <div class="abs" style="left:79.6px;top:130.4px;width:37.6px;height:10.3px;background:#fff;border:0.6px solid #9a9a9a;box-sizing:border-box"></div>
  <div class="abs" style="left:81.6px;top:131.8px;font-size:5.6px;line-height:8px;color:#333">cm</div>
  <svg class="abs" style="left:110px;top:131px" width="6.6" height="9" viewBox="0 0 6.6 9"><rect width="6.6" height="9" fill="#ececec"/><path d="M2.1 4 H4.7 L3.4 5.6 Z" fill="#222"/></svg>
  <!-- fieldset -->
  <div class="abs" style="left:5.8px;top:151.4px;width:134.4px;height:61.4px;border:0.8px solid #b4b4b4;box-sizing:border-box"></div>
  <div class="t" style="left:8.6px;top:148.1px;background:#7b7b7b;padding:0 1px;line-height:8px">Apply calibration to</div>
  <svg class="abs" style="left:17px;top:163px" width="8" height="40" viewBox="0 0 8 40"><rect x="1.7" y="1.8" width="3.8" height="3.8" fill="#f4f4f4" stroke="#2e2e2e" stroke-width="0.7"/><rect x="2.9" y="3" width="1.4" height="1.4" fill="#333"/><circle cx="3.6" cy="19.4" r="2.1" fill="#fafafa"/><circle cx="3.6" cy="36.7" r="2.1" fill="#fafafa"/></svg>
  <div class="t" style="left:25.6px;top:163.2px;font-weight:bold;font-size:6.1px;line-height:8px;color:#fff">Active Image</div>
  <div class="t" style="left:25.8px;top:178.4px;font-weight:bold;font-size:6.1px;line-height:8px;color:#fff">Series</div>
  <div class="t" style="left:25.8px;top:195.8px;font-weight:bold;font-size:6.1px;line-height:8px;color:#fff">Study</div>
  <div class="t" style="left:5.8px;top:218.2px;font-size:5.44px;line-height:8px;color:#ececec">Note: An image pixel is assumed to be square.</div>
  <div class="abs" style="left:1px;top:233px;width:144px;height:0.8px;background:#8c8c8c"></div>
  <div class="btn" style="left:2.4px;top:238.6px;width:54.4px">Reset calibration</div>
  <div class="btn" style="left:66.2px;top:238.6px;width:37.6px">OK</div>
  <div class="btn" style="left:106.4px;top:238.6px;width:37.4px">Cancel</div>
</div>

<!-- ================= CALLOUTS ================= -->
<svg class="abs" style="left:0;top:0" width="973" height="607" viewBox="0 0 973 607">
  <g stroke="#1e86ee" stroke-width="1.3" fill="none">
    <line x1="108.6" y1="70" x2="107.6" y2="199.5"/>
    <line x1="286" y1="47" x2="100.4" y2="264.9"/>
    <line x1="179.5" y1="545" x2="179" y2="482"/>
    <line x1="820" y1="269.5" x2="734" y2="269.5"/>
    <line x1="462.3" y1="70" x2="461.2" y2="336"/>
    <line x1="683" y1="545" x2="681.5" y2="438.6"/>
  </g>
</svg>
<div class="badge" style="left:94px;top:44px"><span>1</span></div>
<div class="badge" style="left:272px;top:33px"><span>2</span></div>
<div class="badge" style="left:165px;top:542px"><span>3</span></div>
<div class="badge" style="left:816px;top:256px"><span>4</span></div>
<div class="badge" style="left:448px;top:43px"><span>5</span></div>
<div class="badge" style="left:669px;top:540px"><span>6</span></div>
<div class="lbl" style="left:58px;top:24px">Right-click Image</div>
<div class="lbl" style="left:243px;top:13px">Measurements</div>
<div class="lbl" style="left:434px;top:23px">Draw Line</div>
<div class="lbl" style="left:849px;top:263px">Follow Instructions</div>
<div class="lbl" style="left:134px;top:576px">Calibrate Image</div>
<div class="lbl" style="left:657px;top:574px">Click OK</div>

</div>
</body>
</html>
